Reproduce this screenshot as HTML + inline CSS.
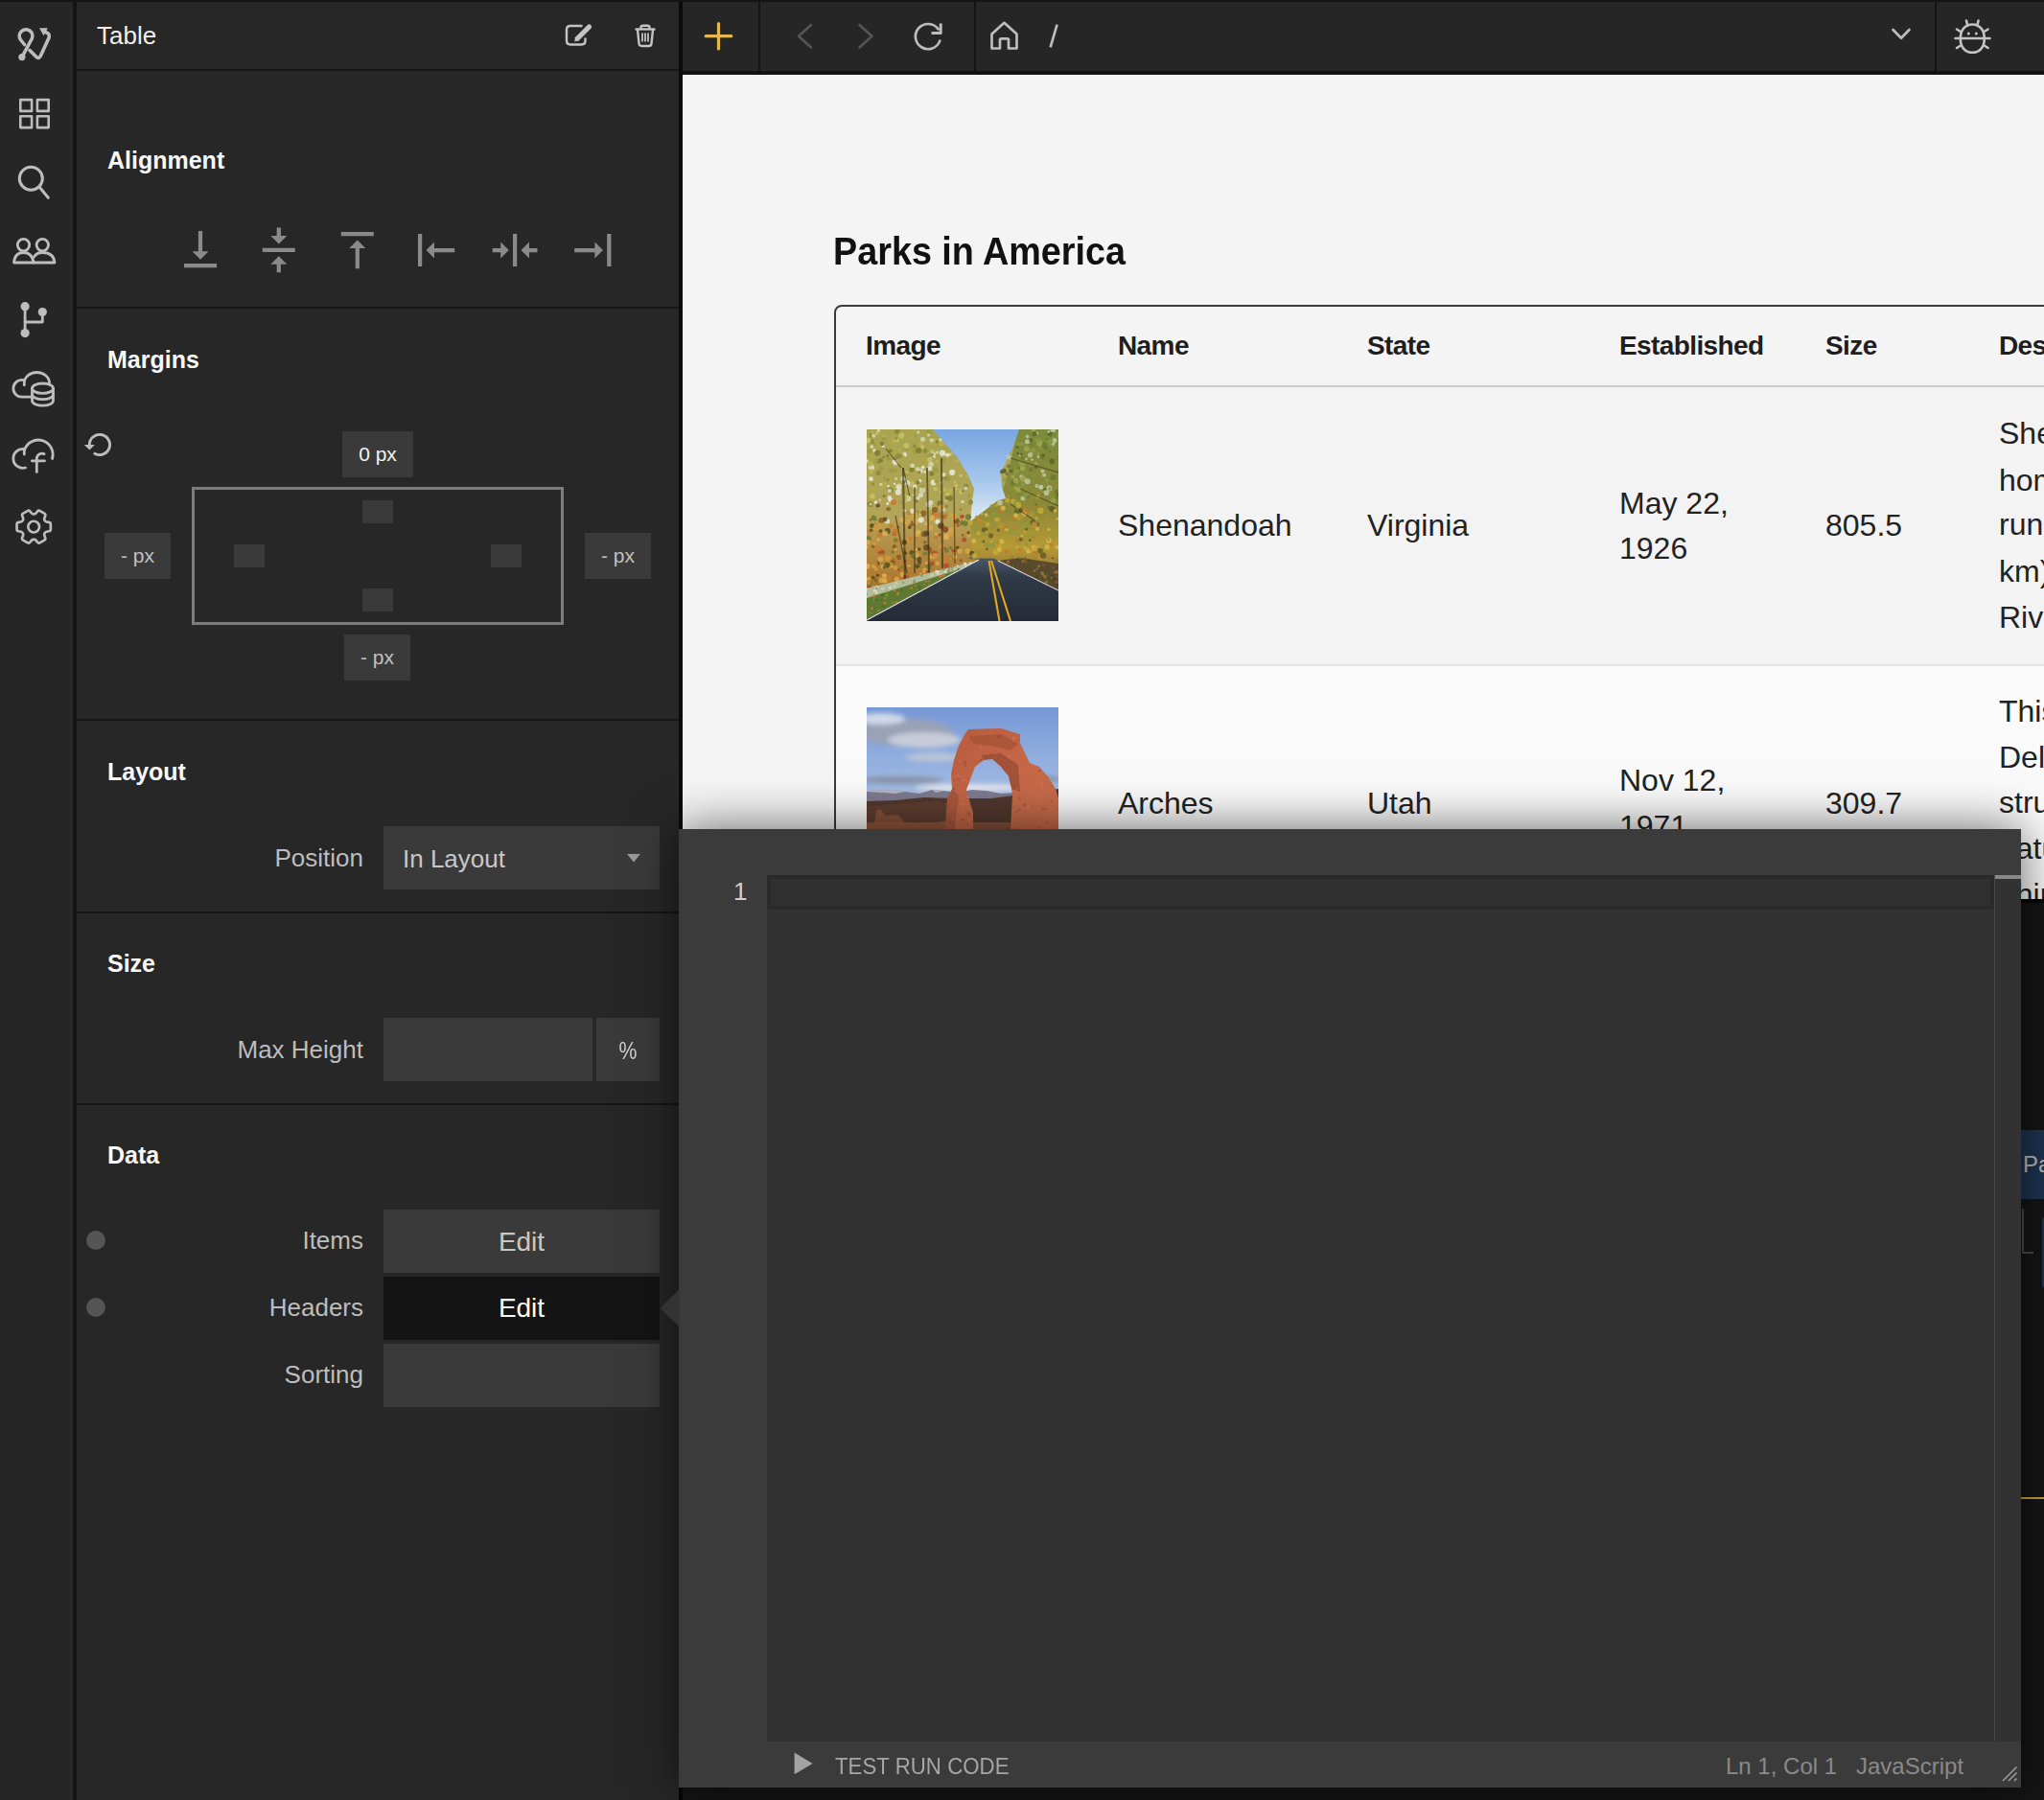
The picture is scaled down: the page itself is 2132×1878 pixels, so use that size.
<!DOCTYPE html>
<html><head><meta charset="utf-8">
<style>
*{box-sizing:border-box;margin:0;padding:0}
html,body{width:2132px;height:1878px;overflow:hidden;background:#151515;font-family:"Liberation Sans",sans-serif}
.a{position:absolute}
.t{position:absolute;white-space:nowrap;line-height:1}
.sb{left:0;top:2px;width:76px;height:1876px;background:#262626}
.sep{background:#141414}
.panel{left:80px;top:2px;width:628px;height:1876px;background:#272727}
.hline{left:80px;width:628px;height:2px;background:#161616}
.h{font-weight:700;font-size:25px;color:#f7f7f7;left:112px}
.lbl{font-size:26px;color:#bdbdbd;right:1753px;text-align:right}
.box{background:#3a3a3a}
.tb{left:712px;top:2px;width:1420px;height:72px;background:#262626}
.content{left:712px;top:78px;width:1420px;height:1800px;background:#f4f4f4;overflow:hidden}
svg{position:absolute;overflow:visible}
.hd{font-size:28px;font-weight:700;top:346.5px;letter-spacing:-0.6px}
.rw{font-size:32px}
</style></head><body>
<!-- top strip -->
<div class="a sep" style="left:0;top:0;width:2132px;height:2px"></div>
<!-- icon sidebar -->
<div class="a sb"></div>
<div class="a sep" style="left:76px;top:2px;width:4px;height:1876px"></div>
<!-- property panel -->
<div class="a panel"></div>
<div class="a hline" style="top:72px"></div>
<div class="a hline" style="top:320px"></div>
<div class="a hline" style="top:750px"></div>
<div class="a hline" style="top:951px"></div>
<div class="a hline" style="top:1151px"></div>
<div class="t" style="left:101px;top:24px;font-size:26px;color:#f0f0f0">Table</div>
<div class="t h" style="top:155px">Alignment</div>
<div class="t h" style="top:363px">Margins</div>
<div class="t h" style="top:793px">Layout</div>
<div class="t h" style="top:993px">Size</div>
<div class="t h" style="top:1193px">Data</div>


<!-- sidebar icons -->
<svg style="left:0;top:0" width="80" height="600" viewBox="0 0 80 600" fill="none" stroke="#bdbdbd" stroke-width="3" stroke-linecap="round" stroke-linejoin="round">
  <g stroke-width="3.6">
    <path d="M22.9,59.6 L33.2,40.5 A6.8,6.8 0 1 0 21.5,41.5 L25.5,46.5"/>
    <path d="M31,52.5 L38,59.5 Q40,61.5 42,59 L51,39.5 Q52.5,35 47.5,33.5"/>
  </g>
  <circle cx="22.9" cy="59.6" r="3.6" fill="#bdbdbd" stroke="none"/>
  <path d="M41,29.3 L49.8,29.3 L45.5,37.3 Z" fill="#bdbdbd" stroke="none"/>
  <g stroke-width="2.6" stroke-linecap="butt">
    <rect x="21.3" y="104.1" width="11.8" height="11.8"/>
    <rect x="38.9" y="104.1" width="11.8" height="11.8"/>
    <rect x="21.3" y="121.3" width="11.8" height="11.8"/>
    <rect x="38.9" y="121.3" width="11.8" height="11.8"/>
  </g>
  <circle cx="32.3" cy="186.2" r="12"/>
  <path d="M41.2,195.2 L50.3,206.3"/>
  <g stroke-width="2.8">
    <circle cx="24.5" cy="255.6" r="6.2"/>
    <circle cx="44.3" cy="255.6" r="6.2"/>
    <path d="M14.5,274 Q15.5,263.5 24.5,263.5 Q33.5,263.5 35,274 Z"/>
    <path d="M35,274 H57 Q56,263.5 44.3,263.5 Q38,263.5 35.5,268"/>
  </g>
  <g stroke-width="2.8">
    <path d="M26.1,320 V347.6"/>
    <path d="M26.1,336 H44.3 V325.5"/>
  </g>
  <circle cx="26.1" cy="319.7" r="4.6" fill="#bdbdbd" stroke="none"/>
  <circle cx="44.3" cy="325.5" r="4.6" fill="#bdbdbd" stroke="none"/>
  <circle cx="26.1" cy="347.6" r="4.6" fill="#bdbdbd" stroke="none"/>
  <g stroke-width="2.8">
    <path d="M32.4,414.2 H22.8 A8.9,8.9 0 1 1 25.4,396.8"/>
    <path d="M25.3,401.8 V399.5 A13.1,11 0 0 1 51.5,399.5"/>
    <ellipse cx="44.5" cy="405.2" rx="11" ry="5.2"/>
    <path d="M33.5,405.2 V418 A11,5.2 0 0 0 55.5,418 V405.2"/>
    <path d="M33.5,411.5 A11,5.2 0 0 0 55.5,411.5"/>
  </g>
  <g stroke-width="2.8">
    <path d="M26.5,488 A10,10 0 1 1 25.5,468.5"/>
    <path d="M25.3,474 V470 A14.3,14.3 0 0 1 54.5,478.5"/>
    <path d="M38.3,492.4 V479 A5.5,5.5 0 0 1 46,473.6"/>
    <path d="M33.3,480.8 H46.5"/>
  </g>
  <g transform="translate(35.2,549.6) rotate(90) scale(1.96) translate(-12,-12)" stroke-width="1.35">
    <path d="M9.594 3.94c.09-.542.56-.94 1.11-.94h2.593c.55 0 1.02.398 1.11.94l.213 1.281c.063.374.313.686.645.87.074.04.147.083.22.127.325.196.72.257 1.075.124l1.217-.456a1.125 1.125 0 0 1 1.37.49l1.296 2.247a1.125 1.125 0 0 1-.26 1.431l-1.003.827c-.293.241-.438.613-.43.992a7.723 7.723 0 0 1 0 .255c-.008.378.137.75.43.991l1.004.827c.424.35.534.955.26 1.43l-1.298 2.247a1.125 1.125 0 0 1-1.369.491l-1.217-.456c-.355-.133-.75-.072-1.076.124a6.47 6.47 0 0 1-.22.128c-.331.183-.581.495-.644.869l-.213 1.281c-.09.543-.56.94-1.110.94h-2.594c-.55 0-1.019-.398-1.11-.94l-.213-1.281c-.062-.374-.312-.686-.644-.87a6.52 6.52 0 0 1-.22-.127c-.325-.196-.72-.257-1.076-.124l-1.217.456a1.125 1.125 0 0 1-1.369-.49l-1.297-2.247a1.125 1.125 0 0 1 .26-1.431l1.004-.827c.292-.24.437-.613.43-.991a6.932 6.932 0 0 1 0-.255c.007-.38-.138-.751-.43-.992l-1.004-.827a1.125 1.125 0 0 1-.26-1.43l1.297-2.247a1.125 1.125 0 0 1 1.370-.491l1.216.456c.356.133.751.072 1.076-.124.072-.044.146-.086.22-.128.332-.183.582-.495.644-.869l.214-1.28Z"/>
    <path d="M15 12a3 3 0 1 1-6 0 3 3 0 0 1 6 0Z"/>
  </g>
</svg>

<!-- panel header icons -->
<svg style="left:580px;top:15px" width="120" height="45" viewBox="580 15 120 45" fill="none" stroke="#c4c4c4" stroke-width="2.4">
  <path d="M607.5,27 H595 Q591,27 591,31 V42.5 Q591,46.5 595,46.5 H606.5 Q610.5,46.5 610.5,42.5 V39.5"/>
  <path d="M601,41.5 L612.5,30" stroke-width="5.2"/><path d="M612.5,30 L614.5,28" stroke-width="5.2" stroke-linecap="round"/>
  <path d="M599,43.5 L600.5,38.5 L604,42 Z" fill="#c4c4c4" stroke="none"/>
  <path d="M662.5,30.5 H683.5"/>
  <path d="M668.5,30 V28.5 Q668.5,26.8 670.5,26.8 H675.5 Q677.5,26.8 677.5,28.5 V30"/>
  <path d="M665,31 L666.5,45.5 Q666.8,48 669.5,48 H676.5 Q679.2,48 679.5,45.5 L681,31"/>
  <path d="M670,34.5 V43.5 M673,34.5 V43.5 M676,34.5 V43.5" stroke-width="1.8"/>
</svg>

<!-- alignment icons -->
<svg style="left:170px;top:225px" width="480" height="70" viewBox="170 225 480 70" fill="#8a8a8a">
  <g transform="translate(183.5,234.7) scale(2.125)"><path d="M16 13h-3V3h-2v10H8l4 4 4-4zM4 19v2h16v-2H4z"/></g>
  <g transform="translate(265.3,235.4) scale(2.125)"><path d="M8 19h3v4h2v-4h3l-4-4-4 4zm8-14h-3V1h-2v4H8l4 4 4-4zM4 11v2h16v-2H4z"/></g>
  <g transform="translate(347.3,235.6) scale(2.125)"><path d="M8 11h3v10h2V11h3l-4-4-4 4zM4 3v2h16V3H4z"/></g>
  <g transform="translate(429.6,235.5) scale(2.125) rotate(-90 12 12)"><path d="M8 11h3v10h2V11h3l-4-4-4 4zM4 3v2h16V3H4z"/></g>
  <g transform="translate(511.6,235.5) scale(2.125) rotate(-90 12 12)"><path d="M8 19h3v4h2v-4h3l-4-4-4 4zm8-14h-3V1h-2v4H8l4 4 4-4zM4 11v2h16v-2H4z"/></g>
  <g transform="translate(592.8,235.5) scale(2.125) rotate(-90 12 12)"><path d="M16 13h-3V3h-2v10H8l4 4 4-4zM4 19v2h16v-2H4z"/></g>
</svg>

<!-- margins widget -->
<svg style="left:85px;top:445px" width="40" height="40" viewBox="85 445 40 40" fill="none" stroke="#bdbdbd" stroke-width="2.4">
  <path d="M93.4,465 A10.6,10.6 0 1 1 97.8,472.6" stroke-width="2.9"/>
  <path d="M87.8,464 L98.8,464 L93.4,469.4 Z" fill="#bdbdbd" stroke="none"/>
</svg>
<div class="a box" style="left:357px;top:450px;width:74px;height:48px"></div>
<div class="t" style="left:357px;width:74px;text-align:center;top:462.5px;font-size:21px;color:#f2f2f2">0 px</div>
<div class="a" style="left:200px;top:508px;width:388px;height:144px;border:3px solid #7c7c7c"></div>
<div class="a box" style="left:378px;top:522px;width:32px;height:24px"></div>
<div class="a box" style="left:244px;top:568px;width:32px;height:24px"></div>
<div class="a box" style="left:512px;top:568px;width:32px;height:24px"></div>
<div class="a box" style="left:378px;top:614px;width:32px;height:24px"></div>
<div class="a box" style="left:109px;top:556px;width:69px;height:48px"></div>
<div class="t" style="left:109px;width:69px;text-align:center;top:569px;font-size:21px;color:#c0c0c0">- px</div>
<div class="a box" style="left:610px;top:556px;width:69px;height:48px"></div>
<div class="t" style="left:610px;width:69px;text-align:center;top:569px;font-size:21px;color:#c0c0c0">- px</div>
<div class="a box" style="left:359px;top:662px;width:69px;height:48px"></div>
<div class="t" style="left:359px;width:69px;text-align:center;top:675px;font-size:21px;color:#c0c0c0">- px</div>

<!-- layout -->
<div class="t lbl" style="top:882px">Position</div>
<div class="a box" style="left:400px;top:862px;width:288px;height:66px"></div>
<div class="t" style="left:420px;top:883px;font-size:26px;color:#c8c8c8">In Layout</div>
<svg style="left:650px;top:885px" width="24" height="20" viewBox="650 885 24 20"><path d="M654,891 H668 L661,899.4 Z" fill="#9a9a9a"/></svg>

<!-- size -->
<div class="t lbl" style="top:1082px">Max Height</div>
<div class="a box" style="left:400px;top:1062px;width:218px;height:66px"></div>
<div class="a box" style="left:622px;top:1062px;width:66px;height:66px"></div>
<div class="t" style="left:622px;width:66px;text-align:center;top:1084px;font-size:25px;color:#d0d0d0;transform:scaleX(.85)">%</div>

<!-- data -->
<svg style="left:85px;top:1280px" width="30" height="100" viewBox="85 1280 30 100"><circle cx="100" cy="1294" r="10" fill="#555"/><circle cx="100" cy="1364" r="10" fill="#555"/></svg>
<div class="t lbl" style="top:1281px">Items</div>
<div class="t lbl" style="top:1351px">Headers</div>
<div class="t lbl" style="top:1421px">Sorting</div>
<div class="a box" style="left:400px;top:1262px;width:288px;height:66px"></div>
<div class="t" style="left:400px;width:288px;text-align:center;top:1282px;font-size:28px;color:#c8c8c8">Edit</div>
<div class="a" style="left:400px;top:1332px;width:288px;height:66px;background:#141414"></div>
<div class="t" style="left:400px;width:288px;text-align:center;top:1351px;font-size:28px;color:#fafafa">Edit</div>
<div class="a box" style="left:400px;top:1402px;width:288px;height:66px"></div>


<!-- separator panel/toolbar -->
<div class="a" style="left:708px;top:2px;width:4px;height:1876px;background:#0b0b0b"></div>
<!-- toolbar -->
<div class="a tb"></div>
<div class="a" style="left:712px;top:74px;width:1420px;height:4px;background:#111"></div>
<div class="a sep" style="left:791px;top:2px;width:2px;height:72px"></div>
<div class="a sep" style="left:1016px;top:2px;width:2px;height:72px"></div>
<div class="a sep" style="left:2018px;top:2px;width:2px;height:72px"></div>


<!-- toolbar icons -->
<svg style="left:712px;top:2px" width="1420" height="72" viewBox="712 2 1420 72" fill="none" stroke-linecap="round" stroke-linejoin="round">
  <path d="M749.5,24.5 V51 M736.2,37.7 H762.8" stroke="#e5b84c" stroke-width="3.2"/>
  <path d="M846,26 L833,37.8 L846,49.5" stroke="#555" stroke-width="2.6"/>
  <path d="M896.5,26 L909.5,37.8 L896.5,49.5" stroke="#555" stroke-width="2.6"/>
  <g stroke="#bdbdbd" stroke-width="2.7">
    <path d="M980.3,42.6 A13.1,13.1 0 1 1 978.6,30.4"/>
    <path d="M981.2,24.6 V34.4 H971.5" stroke-linecap="butt" stroke-width="3"/>
    <path d="M1034.5,50.5 V35.5 L1047.5,23.8 L1060.5,35.5 V50.5 H1052 V41.5 Q1052,40.3 1050.8,40.3 H1044.2 Q1043,40.3 1043,41.5 V50.5 Z"/>
    <path d="M1102.6,25.6 L1095.6,49.4" stroke-linecap="butt"/>
    <path d="M1974.5,31 L1983,39.8 L1991.5,31"/>
  </g>
  <g stroke="#c4c4c4" stroke-width="2.6">
    <path d="M2057.3,25.5 C2065.5,25.5 2069.8,32 2069.8,40.5 C2069.8,49 2065,54.8 2057.3,54.8 C2049.6,54.8 2044.8,49 2044.8,40.5 C2044.8,32 2049,25.5 2057.3,25.5 Z"/>
    <path d="M2039.5,40 H2075.5"/>
    <path d="M2052.3,26.5 L2051,21.5 M2062.3,26.5 L2063.6,21.5"/>
    <path d="M2045,33 L2041,30.5 M2069.6,33 L2073.6,30.5 M2045,47.5 L2041,50 M2069.6,47.5 L2073.6,50"/>
  </g>
  <circle cx="2053.3" cy="34.9" r="1.5" fill="#c4c4c4"/>
  <circle cx="2061.3" cy="34.9" r="1.5" fill="#c4c4c4"/>
</svg>

<!-- content -->
<div class="a content">
</div>
<div class="t" style="left:869px;top:242px;font-size:40px;font-weight:700;color:#111;transform:scaleX(.944);transform-origin:0 0">Parks in America</div>
<div class="a" style="left:870px;top:318px;width:1400px;height:1000px;border:2px solid #3a3a3a;border-radius:8px"></div>
<div class="a" style="left:872px;top:402px;width:1300px;height:2px;background:#cbcbcb"></div>
<div class="a" style="left:872px;top:404px;width:1300px;height:289px;background:#f3f3f3"></div>
<div class="a" style="left:872px;top:693px;width:1300px;height:2px;background:#e4e4e4"></div>
<div class="a" style="left:872px;top:695px;width:1300px;height:300px;background:#fafafa"></div>
<div style="color:#1e1e1e">
<div class="t hd" style="left:903px">Image</div>
<div class="t hd" style="left:1166px">Name</div>
<div class="t hd" style="left:1426px">State</div>
<div class="t hd" style="left:1689px">Established</div>
<div class="t hd" style="left:1904px">Size</div>
<div class="t hd" style="left:2085px">Description</div>
</div>
<div style="color:#222">
<div class="t rw" style="left:1166px;top:532px">Shenandoah</div>
<div class="t rw" style="left:1426px;top:532px">Virginia</div>
<div class="t rw" style="left:1689px;top:508.5px">May 22,</div>
<div class="t rw" style="left:1689px;top:556px">1926</div>
<div class="t rw" style="left:1904px;top:532px">805.5</div>
<div class="t rw" style="left:2085px;top:436px">Shenandoah</div>
<div class="t rw" style="left:2085px;top:484.5px">home</div>
<div class="t rw" style="left:2085px;top:531px">running</div>
<div class="t rw" style="left:2085px;top:579.5px">km)</div>
<div class="t rw" style="left:2085px;top:628px">River</div>
<div class="t rw" style="left:1166px;top:822px">Arches</div>
<div class="t rw" style="left:1426px;top:822px">Utah</div>
<div class="t rw" style="left:1689px;top:798px">Nov 12,</div>
<div class="t rw" style="left:1689px;top:846px">1971</div>
<div class="t rw" style="left:1904px;top:822px">309.7</div>
<div class="t rw" style="left:2085px;top:726px">This</div>
<div class="t rw" style="left:2085px;top:774px">Delicate</div>
<div class="t rw" style="left:2085px;top:821px">structure</div>
<div class="t rw" style="left:2085px;top:869px">natural</div>
<div class="t rw" style="left:2085px;top:917px">ohir</div>
</div>
<!-- photo 1 -->
<svg style="left:904px;top:448px;overflow:hidden" width="200" height="200" viewBox="0 0 200 200">
<defs>
<linearGradient id="p1sky" x1="0" y1="0" x2="0" y2="1"><stop offset="0" stop-color="#78a6e2"/><stop offset=".55" stop-color="#a4c6ec"/><stop offset="1" stop-color="#e2ecf2"/></linearGradient>
<linearGradient id="p1L" x1="0" y1="0" x2="0" y2="1"><stop offset="0" stop-color="#a8a450"/><stop offset=".45" stop-color="#b4a458"/><stop offset=".75" stop-color="#b07c34"/><stop offset="1" stop-color="#8a6a2c"/></linearGradient>
<linearGradient id="p1R" x1="0" y1="0" x2="0" y2="1"><stop offset="0" stop-color="#7c8a3c"/><stop offset=".5" stop-color="#8e8a38"/><stop offset=".72" stop-color="#b69a36"/><stop offset="1" stop-color="#7a6030"/></linearGradient>
<linearGradient id="p1road" x1="0" y1="0" x2="0" y2="1"><stop offset="0" stop-color="#4a5868"/><stop offset=".3" stop-color="#303a48"/><stop offset="1" stop-color="#252b36"/></linearGradient>
</defs>
<rect width="200" height="200" fill="url(#p1L)"/>
<path d="M112,0 H200 V170 L137,137 L110,136 L108,96 L137,74 L145,55 L158,0 Z" fill="url(#p1R)"/>
<path d="M69,0 L159,0 L152,20 L140,45 L141,60 L145,72 L137,74 L108,96 L110,75 L112,62 L106,48 L95,30 Z" fill="url(#p1sky)"/>
<circle cx="64.8" cy="25.6" r="1.3" fill="#e8ecdc" opacity=".85"/>
<circle cx="18.8" cy="99.1" r="1.6" fill="#d09a40" opacity=".85"/>
<circle cx="18.1" cy="72.2" r="1.4" fill="#b0a850" opacity=".85"/>
<circle cx="126.1" cy="99.1" r="2.4" fill="#c8a838" opacity=".85"/>
<circle cx="195.3" cy="7.9" r="1.8" fill="#8a9a48" opacity=".85"/>
<circle cx="108.1" cy="97.1" r="2.6" fill="#c8a838" opacity=".85"/>
<circle cx="116.3" cy="108.6" r="2.3" fill="#c8a838" opacity=".85"/>
<circle cx="112.9" cy="105.2" r="2.3" fill="#8a9a40" opacity=".85"/>
<circle cx="72.3" cy="42.2" r="2.8" fill="#9c9a40" opacity=".85"/>
<circle cx="175.0" cy="124.0" r="3.2" fill="#c8a838" opacity=".85"/>
<circle cx="15.5" cy="94.9" r="2.8" fill="#8a5a28" opacity=".85"/>
<circle cx="139.1" cy="101.0" r="2.1" fill="#c8a838" opacity=".85"/>
<circle cx="188.9" cy="80.6" r="1.3" fill="#7a8838" opacity=".85"/>
<circle cx="61.9" cy="98.3" r="2.1" fill="#e0b050" opacity=".85"/>
<circle cx="177.4" cy="59.0" r="1.9" fill="#c0c8a0" opacity=".85"/>
<circle cx="23.4" cy="10.0" r="1.5" fill="#b0a850" opacity=".85"/>
<circle cx="80.3" cy="47.2" r="2.1" fill="#e8ecdc" opacity=".85"/>
<circle cx="55.7" cy="70.6" r="3.0" fill="#b0a850" opacity=".85"/>
<circle cx="30.2" cy="30.0" r="1.7" fill="#8a8a38" opacity=".85"/>
<circle cx="166.2" cy="31.0" r="1.5" fill="#c0c8a0" opacity=".85"/>
<circle cx="73.9" cy="96.3" r="2.6" fill="#e8ecdc" opacity=".85"/>
<circle cx="190.0" cy="111.3" r="2.1" fill="#b89030" opacity=".85"/>
<circle cx="159.6" cy="66.7" r="1.4" fill="#7a8838" opacity=".85"/>
<circle cx="80.1" cy="32.4" r="2.1" fill="#9c9a40" opacity=".85"/>
<circle cx="68.0" cy="8.9" r="1.5" fill="#9c9a40" opacity=".85"/>
<circle cx="189.8" cy="104.3" r="1.6" fill="#d8b848" opacity=".85"/>
<circle cx="29.7" cy="42.9" r="1.9" fill="#9c9a40" opacity=".85"/>
<circle cx="23.1" cy="83.0" r="2.2" fill="#7a7a30" opacity=".85"/>
<circle cx="17.2" cy="17.4" r="1.7" fill="#d8dcc0" opacity=".85"/>
<circle cx="190.4" cy="61.5" r="3.0" fill="#c0c8a0" opacity=".85"/>
<circle cx="59.6" cy="109.3" r="2.9" fill="#8a5a28" opacity=".85"/>
<circle cx="181.7" cy="60.5" r="2.3" fill="#c0c8a0" opacity=".85"/>
<circle cx="65.9" cy="37.9" r="3.2" fill="#b0a850" opacity=".85"/>
<circle cx="148.0" cy="38.5" r="1.9" fill="#6a7830" opacity=".85"/>
<circle cx="94.4" cy="32.9" r="1.9" fill="#c0b050" opacity=".85"/>
<circle cx="191.0" cy="62.0" r="1.7" fill="#8a9a48" opacity=".85"/>
<circle cx="67.5" cy="82.1" r="2.4" fill="#c8c468" opacity=".85"/>
<circle cx="95.9" cy="111.0" r="1.4" fill="#d09a40" opacity=".85"/>
<circle cx="182.0" cy="133.0" r="2.2" fill="#c07828" opacity=".85"/>
<circle cx="86.8" cy="108.1" r="3.1" fill="#e0b050" opacity=".85"/>
<circle cx="92.6" cy="126.4" r="1.5" fill="#b04a28" opacity=".85"/>
<circle cx="5.5" cy="100.4" r="2.5" fill="#5a4a20" opacity=".85"/>
<circle cx="2.8" cy="165.1" r="2.3" fill="#b04a28" opacity=".85"/>
<circle cx="165.2" cy="35.9" r="1.8" fill="#8a9a48" opacity=".85"/>
<circle cx="152.7" cy="55.4" r="2.9" fill="#6a7830" opacity=".85"/>
<circle cx="182.0" cy="60.1" r="2.4" fill="#c0c8a0" opacity=".85"/>
<circle cx="100.3" cy="90.4" r="1.2" fill="#5a4a20" opacity=".85"/>
<circle cx="155.3" cy="103.5" r="1.5" fill="#c07828" opacity=".85"/>
<circle cx="94.7" cy="123.3" r="1.9" fill="#5a4a20" opacity=".85"/>
<circle cx="156.9" cy="18.0" r="1.7" fill="#5a6428" opacity=".85"/>
<circle cx="8.4" cy="16.6" r="1.3" fill="#9c9a40" opacity=".85"/>
<circle cx="88.6" cy="104.1" r="2.2" fill="#d8a848" opacity=".85"/>
<circle cx="90.5" cy="90.7" r="3.1" fill="#d8a848" opacity=".85"/>
<circle cx="40.5" cy="76.1" r="2.0" fill="#c0b050" opacity=".85"/>
<circle cx="14.5" cy="40.9" r="2.5" fill="#9c9a40" opacity=".85"/>
<circle cx="179.4" cy="26.3" r="2.5" fill="#8a9a48" opacity=".85"/>
<circle cx="50.6" cy="23.3" r="2.7" fill="#9c9a40" opacity=".85"/>
<circle cx="79.7" cy="82.8" r="2.9" fill="#d8dcc0" opacity=".85"/>
<circle cx="80.8" cy="71.6" r="1.4" fill="#c0b050" opacity=".85"/>
<circle cx="3.9" cy="94.2" r="1.2" fill="#8a5a28" opacity=".85"/>
<circle cx="103.5" cy="50.2" r="1.4" fill="#b0a850" opacity=".85"/>
<circle cx="194.3" cy="17.8" r="1.3" fill="#8a9a48" opacity=".85"/>
<circle cx="54.1" cy="22.0" r="3.0" fill="#7a7a30" opacity=".85"/>
<circle cx="81.2" cy="91.2" r="2.2" fill="#8a5a28" opacity=".85"/>
<circle cx="17.9" cy="9.8" r="2.1" fill="#9c9a40" opacity=".85"/>
<circle cx="53.8" cy="2.9" r="1.7" fill="#d0d8b0" opacity=".85"/>
<circle cx="171.2" cy="11.3" r="2.1" fill="#5a6428" opacity=".85"/>
<circle cx="198.9" cy="71.0" r="2.4" fill="#6a7830" opacity=".85"/>
<circle cx="21.9" cy="27.4" r="1.6" fill="#7a7a30" opacity=".85"/>
<circle cx="125.7" cy="90.3" r="2.1" fill="#b89030" opacity=".85"/>
<circle cx="35.6" cy="59.0" r="1.7" fill="#c8c468" opacity=".85"/>
<circle cx="3.7" cy="86.0" r="2.2" fill="#b0a850" opacity=".85"/>
<circle cx="186.9" cy="18.1" r="2.1" fill="#a0a850" opacity=".85"/>
<circle cx="194.1" cy="52.3" r="1.7" fill="#8a9a48" opacity=".85"/>
<circle cx="166.5" cy="120.1" r="2.0" fill="#8a9a40" opacity=".85"/>
<circle cx="2.9" cy="106.3" r="2.1" fill="#c87a30" opacity=".85"/>
<circle cx="16.9" cy="143.0" r="2.5" fill="#d8a848" opacity=".85"/>
<circle cx="119.8" cy="117.8" r="1.6" fill="#8a9a40" opacity=".85"/>
<circle cx="89.2" cy="44.8" r="3.1" fill="#e8ecdc" opacity=".85"/>
<circle cx="64.7" cy="5.9" r="1.6" fill="#d8dcc0" opacity=".85"/>
<circle cx="0.2" cy="64.9" r="2.2" fill="#b0a850" opacity=".85"/>
<circle cx="49.6" cy="132.0" r="2.8" fill="#b04a28" opacity=".85"/>
<circle cx="4.5" cy="51.7" r="2.4" fill="#e8ecdc" opacity=".85"/>
<circle cx="170.6" cy="26.4" r="2.8" fill="#c0c8a0" opacity=".85"/>
<circle cx="77.9" cy="55.4" r="1.5" fill="#d0d8b0" opacity=".85"/>
<circle cx="125.5" cy="124.8" r="1.5" fill="#6a5a28" opacity=".85"/>
<circle cx="150.6" cy="96.6" r="1.2" fill="#b89030" opacity=".85"/>
<circle cx="136.6" cy="117.9" r="1.3" fill="#c07828" opacity=".85"/>
<circle cx="75.3" cy="76.7" r="1.2" fill="#6a7a34" opacity=".85"/>
<circle cx="159.5" cy="127.2" r="2.3" fill="#b89030" opacity=".85"/>
<circle cx="105.2" cy="126.8" r="2.8" fill="#d8a848" opacity=".85"/>
<circle cx="47.0" cy="128.6" r="2.5" fill="#5a4a20" opacity=".85"/>
<circle cx="98.8" cy="65.0" r="2.6" fill="#c8c468" opacity=".85"/>
<circle cx="123.4" cy="109.3" r="1.5" fill="#8a9a40" opacity=".85"/>
<circle cx="130.3" cy="117.8" r="1.5" fill="#d8b848" opacity=".85"/>
<circle cx="12.1" cy="45.7" r="2.6" fill="#8a8a38" opacity=".85"/>
<circle cx="58.2" cy="87.8" r="2.1" fill="#d09a40" opacity=".85"/>
<circle cx="198.7" cy="93.3" r="1.4" fill="#d8b848" opacity=".85"/>
<circle cx="3.5" cy="78.0" r="3.1" fill="#8a8a38" opacity=".85"/>
<circle cx="198.8" cy="65.8" r="3.1" fill="#6a7830" opacity=".85"/>
<circle cx="26.5" cy="139.4" r="3.0" fill="#8a5a28" opacity=".85"/>
<circle cx="46.3" cy="152.6" r="1.2" fill="#c87a30" opacity=".85"/>
<circle cx="190.0" cy="115.9" r="2.7" fill="#d8b848" opacity=".85"/>
<circle cx="68.8" cy="53.7" r="1.2" fill="#c0b050" opacity=".85"/>
<circle cx="167.8" cy="20.4" r="2.6" fill="#7a8838" opacity=".85"/>
<circle cx="58.0" cy="63.3" r="3.2" fill="#d0d8b0" opacity=".85"/>
<circle cx="15.3" cy="157.3" r="2.9" fill="#d8a848" opacity=".85"/>
<circle cx="20.3" cy="141.9" r="3.1" fill="#6a7a34" opacity=".85"/>
<circle cx="194.2" cy="74.2" r="2.7" fill="#a0a850" opacity=".85"/>
<circle cx="188.1" cy="93.4" r="1.3" fill="#b89030" opacity=".85"/>
<circle cx="82.2" cy="104.5" r="2.9" fill="#5a4a20" opacity=".85"/>
<circle cx="9.8" cy="157.6" r="2.1" fill="#8a5a28" opacity=".85"/>
<circle cx="56.3" cy="43.5" r="2.5" fill="#e0e4d0" opacity=".85"/>
<circle cx="33.5" cy="27.5" r="3.0" fill="#8a8a38" opacity=".85"/>
<circle cx="66.6" cy="129.1" r="2.3" fill="#6a7a34" opacity=".85"/>
<circle cx="18.1" cy="58.1" r="1.7" fill="#7a7a30" opacity=".85"/>
<circle cx="161.9" cy="34.4" r="2.9" fill="#a0a850" opacity=".85"/>
<circle cx="82.8" cy="89.1" r="1.9" fill="#c87a30" opacity=".85"/>
<circle cx="99.6" cy="97.6" r="2.6" fill="#6a7a34" opacity=".85"/>
<circle cx="18.5" cy="152.5" r="2.5" fill="#e0b050" opacity=".85"/>
<circle cx="174.6" cy="3.7" r="2.6" fill="#a0a850" opacity=".85"/>
<circle cx="193.7" cy="83.3" r="3.1" fill="#6a5a28" opacity=".85"/>
<circle cx="49.7" cy="18.5" r="2.2" fill="#9c9a40" opacity=".85"/>
<circle cx="188.3" cy="122.7" r="2.7" fill="#d8b848" opacity=".85"/>
<circle cx="17.0" cy="132.1" r="1.5" fill="#c87a30" opacity=".85"/>
<circle cx="25.6" cy="42.8" r="2.6" fill="#9c9a40" opacity=".85"/>
<circle cx="19.9" cy="51.1" r="1.6" fill="#7a7a30" opacity=".85"/>
<circle cx="44.7" cy="102.2" r="1.8" fill="#5a4a20" opacity=".85"/>
<circle cx="55.7" cy="53.8" r="1.7" fill="#e8ecdc" opacity=".85"/>
<circle cx="47.0" cy="42.0" r="2.6" fill="#7a7a30" opacity=".85"/>
<circle cx="11.1" cy="33.0" r="2.5" fill="#9c9a40" opacity=".85"/>
<circle cx="51.5" cy="113.5" r="1.7" fill="#c87a30" opacity=".85"/>
<circle cx="139.2" cy="122.1" r="2.0" fill="#c8a838" opacity=".85"/>
<circle cx="159.4" cy="125.7" r="1.6" fill="#c07828" opacity=".85"/>
<circle cx="62.3" cy="139.4" r="1.6" fill="#d8a848" opacity=".85"/>
<circle cx="21.8" cy="106.0" r="3.0" fill="#5a4a20" opacity=".85"/>
<circle cx="83.4" cy="113.1" r="1.5" fill="#e0b050" opacity=".85"/>
<circle cx="10.9" cy="4.0" r="2.0" fill="#c8c468" opacity=".85"/>
<circle cx="36.8" cy="76.4" r="1.8" fill="#9c9a40" opacity=".85"/>
<circle cx="65.8" cy="31.5" r="2.7" fill="#c8c468" opacity=".85"/>
<circle cx="62.4" cy="123.3" r="3.2" fill="#5a4a20" opacity=".85"/>
<circle cx="33.9" cy="0.5" r="1.9" fill="#9c9a40" opacity=".85"/>
<circle cx="112.2" cy="129.0" r="2.7" fill="#8a9a40" opacity=".85"/>
<circle cx="164.4" cy="73.5" r="2.1" fill="#8a9a40" opacity=".85"/>
<circle cx="108.3" cy="75.9" r="2.7" fill="#8a8a38" opacity=".85"/>
<circle cx="6.1" cy="69.8" r="2.7" fill="#c8c468" opacity=".85"/>
<circle cx="75.1" cy="78.9" r="1.3" fill="#b0a850" opacity=".85"/>
<circle cx="67.8" cy="46.3" r="2.4" fill="#7a7a30" opacity=".85"/>
<circle cx="149.3" cy="117.2" r="1.8" fill="#b89030" opacity=".85"/>
<circle cx="4.9" cy="39.8" r="3.1" fill="#e0e4d0" opacity=".85"/>
<circle cx="163.0" cy="22.6" r="1.2" fill="#7a8838" opacity=".85"/>
<circle cx="60.7" cy="117.7" r="1.7" fill="#8a5a28" opacity=".85"/>
<circle cx="92.2" cy="133.3" r="2.2" fill="#e0b050" opacity=".85"/>
<circle cx="150.6" cy="42.0" r="1.3" fill="#c0c8a0" opacity=".85"/>
<circle cx="14.4" cy="106.2" r="2.0" fill="#5a4a20" opacity=".85"/>
<circle cx="34.6" cy="22.6" r="3.0" fill="#b0a850" opacity=".85"/>
<circle cx="168.2" cy="49.9" r="1.9" fill="#7a8838" opacity=".85"/>
<circle cx="52.1" cy="74.7" r="1.7" fill="#7a7a30" opacity=".85"/>
<circle cx="176.8" cy="98.3" r="2.0" fill="#c07828" opacity=".85"/>
<circle cx="161.7" cy="111.1" r="1.4" fill="#d8b848" opacity=".85"/>
<circle cx="176.6" cy="39.3" r="1.9" fill="#5a6428" opacity=".85"/>
<circle cx="46.6" cy="8.6" r="2.9" fill="#b0a850" opacity=".85"/>
<circle cx="186.0" cy="63.3" r="2.1" fill="#5a6428" opacity=".85"/>
<circle cx="155.0" cy="113.0" r="2.5" fill="#b89030" opacity=".85"/>
<circle cx="73.7" cy="24.0" r="1.7" fill="#d0d8b0" opacity=".85"/>
<circle cx="81.8" cy="63.2" r="1.4" fill="#c8c468" opacity=".85"/>
<circle cx="159.1" cy="93.2" r="1.4" fill="#d8b848" opacity=".85"/>
<circle cx="106.8" cy="111.0" r="1.7" fill="#d8a848" opacity=".85"/>
<circle cx="10.3" cy="126.7" r="2.0" fill="#c87a30" opacity=".85"/>
<circle cx="72.8" cy="33.5" r="1.6" fill="#c8c468" opacity=".85"/>
<circle cx="86.8" cy="26.6" r="1.4" fill="#d0d8b0" opacity=".85"/>
<circle cx="176.6" cy="78.4" r="1.2" fill="#6a5a28" opacity=".85"/>
<circle cx="28.5" cy="137.1" r="2.3" fill="#8a5a28" opacity=".85"/>
<circle cx="69.6" cy="27.5" r="1.3" fill="#e0e4d0" opacity=".85"/>
<circle cx="98.1" cy="136.8" r="1.6" fill="#b04a28" opacity=".85"/>
<circle cx="167.5" cy="7.4" r="1.8" fill="#c0c8a0" opacity=".85"/>
<circle cx="185.2" cy="65.9" r="2.4" fill="#8a9a48" opacity=".85"/>
<circle cx="124.2" cy="104.5" r="2.1" fill="#6a5a28" opacity=".85"/>
<circle cx="43.6" cy="68.0" r="2.0" fill="#9c9a40" opacity=".85"/>
<circle cx="163.1" cy="32.7" r="2.9" fill="#7a8838" opacity=".85"/>
<circle cx="7.6" cy="142.5" r="2.4" fill="#d8a848" opacity=".85"/>
<circle cx="49.9" cy="66.2" r="2.2" fill="#d8dcc0" opacity=".85"/>
<circle cx="4.7" cy="105.2" r="1.7" fill="#5a4a20" opacity=".85"/>
<circle cx="71.7" cy="62.1" r="2.2" fill="#c8c468" opacity=".85"/>
<circle cx="8.1" cy="22.1" r="1.8" fill="#e8ecdc" opacity=".85"/>
<circle cx="16.0" cy="127.9" r="2.5" fill="#b04a28" opacity=".85"/>
<circle cx="5.2" cy="11.3" r="2.6" fill="#9c9a40" opacity=".85"/>
<circle cx="183.2" cy="28.1" r="3.1" fill="#6a7830" opacity=".85"/>
<circle cx="166.6" cy="103.8" r="1.8" fill="#6a5a28" opacity=".85"/>
<circle cx="55.0" cy="138.7" r="2.2" fill="#5a4a20" opacity=".85"/>
<circle cx="41.7" cy="44.7" r="1.8" fill="#c8c468" opacity=".85"/>
<circle cx="39.8" cy="68.6" r="1.8" fill="#c0b050" opacity=".85"/>
<circle cx="179.1" cy="28.7" r="1.4" fill="#c0c8a0" opacity=".85"/>
<circle cx="9.7" cy="145.9" r="2.1" fill="#d09a40" opacity=".85"/>
<circle cx="50.4" cy="91.1" r="2.7" fill="#c0b050" opacity=".85"/>
<circle cx="152.9" cy="75.2" r="2.7" fill="#c8a838" opacity=".85"/>
<circle cx="59.3" cy="87.7" r="3.1" fill="#8a5a28" opacity=".85"/>
<circle cx="146.6" cy="127.0" r="1.8" fill="#b89030" opacity=".85"/>
<circle cx="86.4" cy="87.2" r="1.5" fill="#b0a850" opacity=".85"/>
<circle cx="10.9" cy="96.4" r="2.2" fill="#6a7a34" opacity=".85"/>
<circle cx="82.6" cy="51.2" r="1.9" fill="#8a8a38" opacity=".85"/>
<circle cx="31.7" cy="2.4" r="2.6" fill="#8a8a38" opacity=".85"/>
<circle cx="19.2" cy="108.5" r="2.8" fill="#e0b050" opacity=".85"/>
<circle cx="11.2" cy="139.5" r="2.4" fill="#5a4a20" opacity=".85"/>
<circle cx="120.4" cy="88.0" r="1.5" fill="#c8a838" opacity=".85"/>
<circle cx="8.8" cy="90.4" r="1.7" fill="#c87a30" opacity=".85"/>
<circle cx="182.3" cy="17.8" r="2.5" fill="#8a9a48" opacity=".85"/>
<circle cx="28.5" cy="33.9" r="2.2" fill="#e0e4d0" opacity=".85"/>
<circle cx="162.7" cy="29.7" r="1.8" fill="#6a7830" opacity=".85"/>
<circle cx="198.8" cy="123.1" r="2.3" fill="#d8b848" opacity=".85"/>
<circle cx="168.9" cy="126.7" r="2.7" fill="#d8b848" opacity=".85"/>
<circle cx="52.3" cy="109.5" r="3.0" fill="#d8a848" opacity=".85"/>
<circle cx="142.3" cy="45.2" r="2.1" fill="#c0c8a0" opacity=".85"/>
<circle cx="194.4" cy="50.3" r="3.0" fill="#6a7830" opacity=".85"/>
<circle cx="176.0" cy="2.6" r="1.7" fill="#7a8838" opacity=".85"/>
<circle cx="40.6" cy="27.1" r="1.6" fill="#e0e4d0" opacity=".85"/>
<circle cx="65.7" cy="40.7" r="2.5" fill="#e8ecdc" opacity=".85"/>
<circle cx="87.4" cy="123.2" r="1.8" fill="#6a7a34" opacity=".85"/>
<circle cx="78.3" cy="99.5" r="1.5" fill="#c87a30" opacity=".85"/>
<circle cx="5.4" cy="18.1" r="1.9" fill="#d8dcc0" opacity=".85"/>
<circle cx="27.7" cy="109.4" r="1.3" fill="#c87a30" opacity=".85"/>
<circle cx="13.2" cy="100.4" r="2.8" fill="#d09a40" opacity=".85"/>
<circle cx="175.9" cy="128.5" r="2.0" fill="#c07828" opacity=".85"/>
<circle cx="41.1" cy="19.0" r="2.9" fill="#9c9a40" opacity=".85"/>
<circle cx="165.0" cy="107.4" r="1.4" fill="#c8a838" opacity=".85"/>
<circle cx="158.4" cy="109.9" r="1.9" fill="#8a9a40" opacity=".85"/>
<circle cx="4.2" cy="43.6" r="2.6" fill="#c0b050" opacity=".85"/>
<circle cx="182.1" cy="130.8" r="2.2" fill="#8a9a40" opacity=".85"/>
<circle cx="82.6" cy="74.2" r="1.9" fill="#c8c468" opacity=".85"/>
<circle cx="172.4" cy="15.5" r="1.5" fill="#6a7830" opacity=".85"/>
<circle cx="104.7" cy="49.0" r="1.3" fill="#c0b050" opacity=".85"/>
<circle cx="98.2" cy="83.6" r="1.6" fill="#8a8a38" opacity=".85"/>
<circle cx="103.0" cy="98.3" r="2.8" fill="#6a7a34" opacity=".85"/>
<circle cx="157.6" cy="118.5" r="2.5" fill="#8a9a40" opacity=".85"/>
<circle cx="19.0" cy="157.8" r="2.7" fill="#e0b050" opacity=".85"/>
<circle cx="177.7" cy="4.3" r="1.7" fill="#c0c8a0" opacity=".85"/>
<circle cx="100.2" cy="64.5" r="1.7" fill="#8a8a38" opacity=".85"/>
<circle cx="25.4" cy="101.0" r="2.4" fill="#c87a30" opacity=".85"/>
<circle cx="69.7" cy="55.5" r="2.9" fill="#e8ecdc" opacity=".85"/>
<circle cx="148.4" cy="28.8" r="2.7" fill="#c0c8a0" opacity=".85"/>
<circle cx="46.2" cy="56.8" r="2.6" fill="#e8ecdc" opacity=".85"/>
<circle cx="38.3" cy="51.3" r="2.9" fill="#d8dcc0" opacity=".85"/>
<circle cx="144.6" cy="102.5" r="1.7" fill="#c07828" opacity=".85"/>
<circle cx="199.0" cy="28.0" r="1.6" fill="#8a9a48" opacity=".85"/>
<circle cx="146.7" cy="73.9" r="2.5" fill="#c8a838" opacity=".85"/>
<circle cx="56.2" cy="150.5" r="1.2" fill="#e0b050" opacity=".85"/>
<circle cx="138.7" cy="85.1" r="2.1" fill="#c07828" opacity=".85"/>
<circle cx="51.4" cy="125.5" r="1.7" fill="#e0b050" opacity=".85"/>
<circle cx="140.2" cy="99.9" r="2.9" fill="#b89030" opacity=".85"/>
<circle cx="154.8" cy="119.0" r="2.6" fill="#b89030" opacity=".85"/>
<circle cx="24.8" cy="73.5" r="2.6" fill="#e0e4d0" opacity=".85"/>
<circle cx="48.5" cy="68.0" r="1.5" fill="#e0e4d0" opacity=".85"/>
<circle cx="171.7" cy="88.1" r="2.9" fill="#b89030" opacity=".85"/>
<circle cx="65.6" cy="1.8" r="3.0" fill="#9c9a40" opacity=".85"/>
<circle cx="7.6" cy="92.4" r="2.8" fill="#6a7a34" opacity=".85"/>
<circle cx="114.9" cy="92.0" r="2.2" fill="#b89030" opacity=".85"/>
<circle cx="158.5" cy="62.9" r="2.7" fill="#a0a850" opacity=".85"/>
<circle cx="42.0" cy="116.3" r="2.7" fill="#d09a40" opacity=".85"/>
<circle cx="145.8" cy="104.4" r="1.7" fill="#d8b848" opacity=".85"/>
<circle cx="83.7" cy="71.5" r="1.9" fill="#7a7a30" opacity=".85"/>
<circle cx="21.9" cy="51.6" r="3.1" fill="#b0a850" opacity=".85"/>
<circle cx="92.4" cy="28.0" r="1.3" fill="#b0a850" opacity=".85"/>
<circle cx="93.8" cy="95.5" r="3.1" fill="#8a5a28" opacity=".85"/>
<circle cx="159.1" cy="70.3" r="2.7" fill="#7a8838" opacity=".85"/>
<circle cx="25.0" cy="141.7" r="2.9" fill="#d8a848" opacity=".85"/>
<circle cx="140.8" cy="116.9" r="2.6" fill="#d8b848" opacity=".85"/>
<circle cx="0.5" cy="122.7" r="1.7" fill="#d8a848" opacity=".85"/>
<circle cx="64.1" cy="82.4" r="1.4" fill="#c0b050" opacity=".85"/>
<circle cx="30.6" cy="51.5" r="1.4" fill="#d0d8b0" opacity=".85"/>
<circle cx="181.2" cy="133.3" r="2.9" fill="#b89030" opacity=".85"/>
<circle cx="116.5" cy="111.7" r="1.3" fill="#8a9a40" opacity=".85"/>
<circle cx="50.0" cy="17.3" r="1.7" fill="#8a8a38" opacity=".85"/>
<circle cx="69.3" cy="26.0" r="2.8" fill="#d8dcc0" opacity=".85"/>
<circle cx="121.9" cy="117.0" r="1.4" fill="#6a5a28" opacity=".85"/>
<circle cx="39.5" cy="117.8" r="2.7" fill="#5a4a20" opacity=".85"/>
<circle cx="23.7" cy="71.2" r="2.1" fill="#e8ecdc" opacity=".85"/>
<circle cx="11.7" cy="79.4" r="2.2" fill="#5a4a20" opacity=".85"/>
<circle cx="32.9" cy="101.9" r="1.5" fill="#8a5a28" opacity=".85"/>
<circle cx="93.6" cy="95.6" r="2.9" fill="#8a5a28" opacity=".85"/>
<circle cx="72.1" cy="109.9" r="1.3" fill="#8a5a28" opacity=".85"/>
<circle cx="161.7" cy="16.0" r="2.7" fill="#8a9a48" opacity=".85"/>
<circle cx="6.8" cy="122.1" r="1.9" fill="#8a5a28" opacity=".85"/>
<circle cx="68.3" cy="132.3" r="3.0" fill="#d8a848" opacity=".85"/>
<circle cx="87.0" cy="71.8" r="2.9" fill="#7a7a30" opacity=".85"/>
<circle cx="71.0" cy="83.9" r="3.2" fill="#8a5a28" opacity=".85"/>
<circle cx="195.0" cy="111.3" r="1.9" fill="#8a9a40" opacity=".85"/>
<circle cx="194.5" cy="14.9" r="2.0" fill="#c0c8a0" opacity=".85"/>
<circle cx="177.1" cy="92.7" r="1.8" fill="#c8a838" opacity=".85"/>
<circle cx="9.3" cy="139.7" r="2.7" fill="#c87a30" opacity=".85"/>
<circle cx="122.3" cy="104.8" r="2.6" fill="#6a5a28" opacity=".85"/>
<circle cx="175.3" cy="14.1" r="2.5" fill="#7a8838" opacity=".85"/>
<circle cx="36.3" cy="6.3" r="3.0" fill="#c8c468" opacity=".85"/>
<circle cx="73.8" cy="139.8" r="2.3" fill="#d8a848" opacity=".85"/>
<circle cx="172.5" cy="31.4" r="1.2" fill="#c0c8a0" opacity=".85"/>
<circle cx="10.9" cy="96.5" r="1.4" fill="#e0b050" opacity=".85"/>
<circle cx="77.4" cy="100.6" r="3.2" fill="#5a4a20" opacity=".85"/>
<circle cx="154.0" cy="93.3" r="2.1" fill="#c07828" opacity=".85"/>
<circle cx="1.9" cy="113.8" r="2.9" fill="#6a7a34" opacity=".85"/>
<circle cx="173.9" cy="21.9" r="2.6" fill="#8a9a48" opacity=".85"/>
<circle cx="90.2" cy="126.5" r="1.9" fill="#b04a28" opacity=".85"/>
<circle cx="125.7" cy="120.6" r="3.1" fill="#8a9a40" opacity=".85"/>
<circle cx="182.7" cy="9.0" r="1.3" fill="#7a8838" opacity=".85"/>
<circle cx="137.3" cy="105.1" r="1.8" fill="#6a5a28" opacity=".85"/>
<circle cx="33.2" cy="146.4" r="1.3" fill="#8a5a28" opacity=".85"/>
<circle cx="189.8" cy="123.7" r="1.5" fill="#c8a838" opacity=".85"/>
<circle cx="72.7" cy="109.6" r="2.0" fill="#e0b050" opacity=".85"/>
<circle cx="155.6" cy="77.0" r="2.7" fill="#8a9a40" opacity=".85"/>
<circle cx="58.5" cy="10.3" r="2.6" fill="#d0d8b0" opacity=".85"/>
<circle cx="66.4" cy="103.0" r="2.9" fill="#d8a848" opacity=".85"/>
<circle cx="49.2" cy="65.9" r="2.7" fill="#b0a850" opacity=".85"/>
<circle cx="161.5" cy="48.2" r="1.7" fill="#a0a850" opacity=".85"/>
<circle cx="31.5" cy="156.5" r="2.8" fill="#d8a848" opacity=".85"/>
<circle cx="173.4" cy="97.2" r="2.9" fill="#6a5a28" opacity=".85"/>
<circle cx="69.4" cy="14.5" r="2.8" fill="#b0a850" opacity=".85"/>
<circle cx="157.5" cy="122.8" r="1.8" fill="#c8a838" opacity=".85"/>
<circle cx="135.5" cy="79.1" r="1.7" fill="#c8a838" opacity=".85"/>
<circle cx="158.3" cy="78.2" r="2.8" fill="#c8a838" opacity=".85"/>
<circle cx="46.6" cy="98.5" r="3.0" fill="#8a5a28" opacity=".85"/>
<circle cx="95.3" cy="100.2" r="1.6" fill="#b04a28" opacity=".85"/>
<circle cx="161.2" cy="49.3" r="1.9" fill="#c0c8a0" opacity=".85"/>
<circle cx="171.4" cy="41.9" r="2.2" fill="#6a7830" opacity=".85"/>
<circle cx="74.3" cy="78.8" r="1.8" fill="#c87a30" opacity=".85"/>
<circle cx="69.0" cy="88.3" r="1.3" fill="#5a4a20" opacity=".85"/>
<circle cx="185.1" cy="47.6" r="2.1" fill="#c0c8a0" opacity=".85"/>
<circle cx="50.8" cy="6.4" r="1.6" fill="#9c9a40" opacity=".85"/>
<circle cx="5.5" cy="5.9" r="2.6" fill="#8a8a38" opacity=".85"/>
<circle cx="12.8" cy="101.7" r="1.4" fill="#d09a40" opacity=".85"/>
<circle cx="51.4" cy="96.0" r="3.1" fill="#e0b050" opacity=".85"/>
<circle cx="36.5" cy="144.4" r="1.7" fill="#6a7a34" opacity=".85"/>
<circle cx="188.2" cy="10.1" r="1.3" fill="#6a7830" opacity=".85"/>
<circle cx="51.6" cy="87.3" r="2.7" fill="#8a8a38" opacity=".85"/>
<circle cx="11.2" cy="24.6" r="3.1" fill="#7a7a30" opacity=".85"/>
<circle cx="130.5" cy="80.0" r="2.0" fill="#8a9a40" opacity=".85"/>
<circle cx="47.7" cy="24.3" r="1.2" fill="#b0a850" opacity=".85"/>
<circle cx="159.8" cy="26.7" r="1.4" fill="#c0c8a0" opacity=".85"/>
<circle cx="28.0" cy="76.0" r="3.1" fill="#c87a30" opacity=".85"/>
<circle cx="68.0" cy="139.9" r="2.5" fill="#b04a28" opacity=".85"/>
<circle cx="66.4" cy="125.1" r="2.1" fill="#b04a28" opacity=".85"/>
<circle cx="87.8" cy="25.4" r="1.7" fill="#c8c468" opacity=".85"/>
<circle cx="54.2" cy="142.7" r="1.5" fill="#5a4a20" opacity=".85"/>
<circle cx="21.8" cy="77.6" r="1.5" fill="#e8ecdc" opacity=".85"/>
<circle cx="11.4" cy="152.2" r="1.6" fill="#5a4a20" opacity=".85"/>
<circle cx="167.1" cy="20.3" r="3.1" fill="#a0a850" opacity=".85"/>
<circle cx="185.0" cy="16.6" r="3.0" fill="#6a7830" opacity=".85"/>
<circle cx="28.9" cy="108.8" r="2.2" fill="#b04a28" opacity=".85"/>
<circle cx="88.6" cy="134.2" r="1.8" fill="#8a5a28" opacity=".85"/>
<circle cx="43.7" cy="97.1" r="1.6" fill="#6a7a34" opacity=".85"/>
<circle cx="15.9" cy="14.9" r="2.2" fill="#7a7a30" opacity=".85"/>
<circle cx="35.1" cy="23.3" r="2.5" fill="#b0a850" opacity=".85"/>
<circle cx="13.1" cy="124.6" r="2.6" fill="#c87a30" opacity=".85"/>
<circle cx="103.7" cy="59.1" r="2.5" fill="#8a8a38" opacity=".85"/>
<circle cx="18.1" cy="69.6" r="1.5" fill="#7a7a30" opacity=".85"/>
<circle cx="49.7" cy="95.7" r="1.3" fill="#c0b050" opacity=".85"/>
<circle cx="193.7" cy="12.1" r="1.7" fill="#5a6428" opacity=".85"/>
<circle cx="58.3" cy="18.3" r="2.1" fill="#c8c468" opacity=".85"/>
<circle cx="106.1" cy="91.3" r="3.1" fill="#6a7a34" opacity=".85"/>
<circle cx="62.4" cy="94.4" r="1.2" fill="#b0a850" opacity=".85"/>
<circle cx="52.3" cy="142.3" r="2.1" fill="#6a7a34" opacity=".85"/>
<circle cx="173.9" cy="121.9" r="1.4" fill="#d8b848" opacity=".85"/>
<circle cx="117.2" cy="129.5" r="1.4" fill="#c07828" opacity=".85"/>
<circle cx="45.4" cy="113.7" r="2.0" fill="#c87a30" opacity=".85"/>
<circle cx="187.5" cy="66.1" r="2.9" fill="#c0c8a0" opacity=".85"/>
<circle cx="7.2" cy="165.0" r="1.9" fill="#e0b050" opacity=".85"/>
<circle cx="48.1" cy="57.0" r="3.2" fill="#c0b050" opacity=".85"/>
<circle cx="10.7" cy="88.0" r="3.1" fill="#b0a850" opacity=".85"/>
<circle cx="174.1" cy="112.7" r="1.4" fill="#c07828" opacity=".85"/>
<circle cx="13.9" cy="73.6" r="1.2" fill="#d8dcc0" opacity=".85"/>
<circle cx="84.1" cy="67.5" r="2.1" fill="#c8c468" opacity=".85"/>
<circle cx="176.9" cy="5.8" r="1.7" fill="#7a8838" opacity=".85"/>
<circle cx="124.7" cy="106.8" r="1.3" fill="#c8a838" opacity=".85"/>
<circle cx="50.1" cy="88.5" r="3.1" fill="#d8a848" opacity=".85"/>
<circle cx="22.6" cy="59.1" r="1.3" fill="#e8ecdc" opacity=".85"/>
<circle cx="180.3" cy="14.4" r="3.1" fill="#a0a850" opacity=".85"/>
<circle cx="24.8" cy="22.3" r="2.0" fill="#7a7a30" opacity=".85"/>
<circle cx="54.8" cy="125.1" r="1.8" fill="#5a4a20" opacity=".85"/>
<circle cx="122.0" cy="96.9" r="1.6" fill="#b89030" opacity=".85"/>
<circle cx="60.7" cy="81.2" r="1.3" fill="#c0b050" opacity=".85"/>
<circle cx="44.3" cy="87.1" r="2.4" fill="#c87a30" opacity=".85"/>
<circle cx="184.8" cy="27.6" r="1.8" fill="#5a6428" opacity=".85"/>
<circle cx="98.3" cy="48.4" r="1.8" fill="#c8c468" opacity=".85"/>
<circle cx="31.7" cy="11.4" r="2.1" fill="#c8c468" opacity=".85"/>
<circle cx="70.8" cy="129.7" r="3.2" fill="#b04a28" opacity=".85"/>
<circle cx="83.4" cy="113.6" r="1.6" fill="#d8a848" opacity=".85"/>
<circle cx="164.2" cy="88.0" r="2.7" fill="#d8b848" opacity=".85"/>
<circle cx="53.7" cy="107.2" r="2.6" fill="#e0b050" opacity=".85"/>
<circle cx="174.2" cy="0.7" r="2.4" fill="#a0a850" opacity=".85"/>
<circle cx="29.9" cy="144.5" r="2.4" fill="#d09a40" opacity=".85"/>
<circle cx="75.9" cy="76.9" r="2.6" fill="#7a7a30" opacity=".85"/>
<circle cx="70.6" cy="89.4" r="2.5" fill="#c87a30" opacity=".85"/>
<circle cx="99.9" cy="75.5" r="1.8" fill="#d8dcc0" opacity=".85"/>
<circle cx="87.1" cy="64.1" r="2.8" fill="#c0b050" opacity=".85"/>
<circle cx="64.8" cy="143.4" r="3.1" fill="#6a7a34" opacity=".85"/>
<circle cx="191.2" cy="4.3" r="3.0" fill="#5a6428" opacity=".85"/>
<circle cx="184.1" cy="131.5" r="3.2" fill="#6a5a28" opacity=".85"/>
<circle cx="165.1" cy="123.6" r="2.1" fill="#c8a838" opacity=".85"/>
<circle cx="189.6" cy="115.0" r="1.4" fill="#8a9a40" opacity=".85"/>
<circle cx="100.2" cy="110.3" r="1.5" fill="#6a7a34" opacity=".85"/>
<circle cx="192.9" cy="82.7" r="2.4" fill="#6a5a28" opacity=".85"/>
<circle cx="68.7" cy="90.1" r="1.5" fill="#c0b050" opacity=".85"/>
<circle cx="73.3" cy="12.8" r="1.6" fill="#7a7a30" opacity=".85"/>
<circle cx="84.2" cy="26.6" r="2.2" fill="#e8ecdc" opacity=".85"/>
<circle cx="178.6" cy="70.1" r="2.3" fill="#c8a838" opacity=".85"/>
<circle cx="82.3" cy="133.9" r="2.6" fill="#c87a30" opacity=".85"/>
<circle cx="183.4" cy="67.6" r="1.2" fill="#6a7830" opacity=".85"/>
<circle cx="39.3" cy="84.6" r="1.7" fill="#e8ecdc" opacity=".85"/>
<circle cx="39.7" cy="102.3" r="2.2" fill="#d09a40" opacity=".85"/>
<circle cx="5.8" cy="12.9" r="2.2" fill="#8a8a38" opacity=".85"/>
<circle cx="12.4" cy="2.1" r="1.8" fill="#b0a850" opacity=".85"/>
<circle cx="70.8" cy="28.8" r="1.4" fill="#d0d8b0" opacity=".85"/>
<circle cx="12.6" cy="32.6" r="1.2" fill="#b0a850" opacity=".85"/>
<circle cx="178.1" cy="99.1" r="2.1" fill="#6a5a28" opacity=".85"/>
<circle cx="47.7" cy="37.9" r="2.4" fill="#d8dcc0" opacity=".85"/>
<circle cx="163.2" cy="51.6" r="3.1" fill="#a0a850" opacity=".85"/>
<circle cx="195.9" cy="11.5" r="2.5" fill="#c0c8a0" opacity=".85"/>
<circle cx="44.3" cy="52.6" r="2.2" fill="#b0a850" opacity=".85"/>
<circle cx="17.5" cy="28.9" r="1.2" fill="#7a7a30" opacity=".85"/>
<circle cx="79.2" cy="61.7" r="2.9" fill="#c0b050" opacity=".85"/>
<circle cx="24.7" cy="140.4" r="1.7" fill="#6a7a34" opacity=".85"/>
<circle cx="93.4" cy="58.6" r="1.8" fill="#c8c468" opacity=".85"/>
<circle cx="68.3" cy="26.5" r="1.4" fill="#7a7a30" opacity=".85"/>
<circle cx="109.0" cy="133.9" r="2.1" fill="#6a7a34" opacity=".85"/>
<circle cx="31.8" cy="60.0" r="2.0" fill="#d0d8b0" opacity=".85"/>
<circle cx="141.3" cy="44.3" r="2.4" fill="#5a6428" opacity=".85"/>
<circle cx="106.9" cy="68.7" r="1.5" fill="#9c9a40" opacity=".85"/>
<circle cx="170.4" cy="125.1" r="1.3" fill="#b89030" opacity=".85"/>
<circle cx="78.0" cy="14.6" r="2.9" fill="#c0b050" opacity=".85"/>
<circle cx="37.7" cy="151.5" r="3.0" fill="#d8a848" opacity=".85"/>
<circle cx="38.6" cy="122.2" r="1.8" fill="#e0b050" opacity=".85"/>
<circle cx="56.5" cy="68.6" r="2.7" fill="#d8dcc0" opacity=".85"/>
<circle cx="187.3" cy="30.0" r="2.8" fill="#7a8838" opacity=".85"/>
<circle cx="70.3" cy="70.1" r="2.6" fill="#b0a850" opacity=".85"/>
<circle cx="200.0" cy="68.1" r="1.4" fill="#5a6428" opacity=".85"/>
<circle cx="23.0" cy="155.2" r="2.6" fill="#c87a30" opacity=".85"/>
<circle cx="80.9" cy="103.5" r="2.7" fill="#b04a28" opacity=".85"/>
<circle cx="62.2" cy="108.5" r="2.9" fill="#5a4a20" opacity=".85"/>
<circle cx="143.3" cy="43.3" r="2.6" fill="#5a6428" opacity=".85"/>
<circle cx="187.1" cy="19.0" r="2.5" fill="#6a7830" opacity=".85"/>
<circle cx="175.0" cy="99.5" r="3.1" fill="#b89030" opacity=".85"/>
<circle cx="22.2" cy="134.5" r="3.0" fill="#d09a40" opacity=".85"/>
<circle cx="83.4" cy="126.5" r="2.4" fill="#6a7a34" opacity=".85"/>
<circle cx="56.2" cy="15.3" r="2.0" fill="#c0b050" opacity=".85"/>
<circle cx="138.3" cy="125.6" r="2.5" fill="#d8b848" opacity=".85"/>
<circle cx="101.7" cy="115.0" r="2.5" fill="#b04a28" opacity=".85"/>
<circle cx="32.7" cy="132.7" r="1.7" fill="#c87a30" opacity=".85"/>
<circle cx="33.6" cy="59.0" r="2.5" fill="#d8dcc0" opacity=".85"/>
<circle cx="27.3" cy="120.2" r="1.7" fill="#6a7a34" opacity=".85"/>
<circle cx="1.2" cy="117.6" r="2.5" fill="#d8a848" opacity=".85"/>
<circle cx="26.7" cy="120.3" r="1.7" fill="#d09a40" opacity=".85"/>
<circle cx="109.7" cy="129.3" r="2.5" fill="#5a4a20" opacity=".85"/>
<circle cx="167.9" cy="69.0" r="2.6" fill="#6a7830" opacity=".85"/>
<circle cx="72.1" cy="35.1" r="1.8" fill="#b0a850" opacity=".85"/>
<circle cx="22.1" cy="52.5" r="1.5" fill="#8a8a38" opacity=".85"/>
<circle cx="93.7" cy="61.7" r="1.3" fill="#c8c468" opacity=".85"/>
<circle cx="97.1" cy="127.0" r="2.7" fill="#d8a848" opacity=".85"/>
<circle cx="21.8" cy="83.1" r="1.6" fill="#8a5a28" opacity=".85"/>
<circle cx="1.7" cy="156.3" r="2.5" fill="#d8a848" opacity=".85"/>
<circle cx="79.1" cy="24.7" r="3.1" fill="#e8ecdc" opacity=".85"/>
<circle cx="33.7" cy="133.4" r="2.7" fill="#8a5a28" opacity=".85"/>
<circle cx="75.9" cy="110.0" r="1.7" fill="#b04a28" opacity=".85"/>
<circle cx="166.3" cy="40.7" r="2.3" fill="#7a8838" opacity=".85"/>
<circle cx="43.3" cy="71.9" r="3.2" fill="#d0d8b0" opacity=".85"/>
<circle cx="17.9" cy="6.8" r="1.6" fill="#c0b050" opacity=".85"/>
<circle cx="0.6" cy="142.9" r="2.8" fill="#e0b050" opacity=".85"/>
<circle cx="28.6" cy="12.2" r="2.6" fill="#c0b050" opacity=".85"/>
<circle cx="12.5" cy="1.5" r="1.6" fill="#d8dcc0" opacity=".85"/>
<circle cx="160.8" cy="114.8" r="2.1" fill="#6a5a28" opacity=".85"/>
<circle cx="64.7" cy="78.3" r="3.0" fill="#d8dcc0" opacity=".85"/>
<circle cx="12.0" cy="115.0" r="1.8" fill="#e0b050" opacity=".85"/>
<circle cx="190.6" cy="81.7" r="1.8" fill="#5a6428" opacity=".85"/>
<circle cx="106.1" cy="107.7" r="1.6" fill="#5a4a20" opacity=".85"/>
<circle cx="115.8" cy="94.3" r="1.9" fill="#c07828" opacity=".85"/>
<circle cx="22.9" cy="30.7" r="2.3" fill="#9c9a40" opacity=".85"/>
<circle cx="44.3" cy="142.3" r="1.6" fill="#d8a848" opacity=".85"/>
<circle cx="91.6" cy="92.0" r="2.7" fill="#d09a40" opacity=".85"/>
<circle cx="170.3" cy="115.5" r="1.5" fill="#6a5a28" opacity=".85"/>
<circle cx="110.1" cy="121.5" r="1.4" fill="#b89030" opacity=".85"/>
<circle cx="103.0" cy="78.2" r="2.3" fill="#b0a850" opacity=".85"/>
<circle cx="112.6" cy="131.7" r="2.8" fill="#c8a838" opacity=".85"/>
<circle cx="8.3" cy="119.3" r="2.1" fill="#d09a40" opacity=".85"/>
<circle cx="177.7" cy="105.6" r="2.3" fill="#b89030" opacity=".85"/>
<circle cx="174.2" cy="28.6" r="1.9" fill="#7a8838" opacity=".85"/>
<circle cx="24.5" cy="63.4" r="3.1" fill="#8a8a38" opacity=".85"/>
<circle cx="8.7" cy="102.6" r="2.3" fill="#d09a40" opacity=".85"/>
<circle cx="6.8" cy="154.7" r="1.9" fill="#5a4a20" opacity=".85"/>
<circle cx="88.0" cy="134.5" r="1.3" fill="#d8a848" opacity=".85"/>
<circle cx="37.1" cy="94.2" r="2.6" fill="#e0b050" opacity=".85"/>
<circle cx="167.2" cy="100.0" r="3.2" fill="#8a9a40" opacity=".85"/>
<circle cx="189.8" cy="2.3" r="1.5" fill="#c0c8a0" opacity=".85"/>
<circle cx="167.4" cy="12.7" r="2.5" fill="#c0c8a0" opacity=".85"/>
<circle cx="78.5" cy="80.9" r="2.9" fill="#e0b050" opacity=".85"/>
<circle cx="103.4" cy="61.4" r="1.8" fill="#d8dcc0" opacity=".85"/>
<circle cx="33.9" cy="61.4" r="2.4" fill="#e0e4d0" opacity=".85"/>
<circle cx="187.5" cy="53.4" r="2.2" fill="#8a9a48" opacity=".85"/>
<circle cx="4.1" cy="78.1" r="1.3" fill="#d8dcc0" opacity=".85"/>
<circle cx="76.9" cy="10.8" r="1.9" fill="#d0d8b0" opacity=".85"/>
<circle cx="198.4" cy="5.8" r="2.7" fill="#8a9a48" opacity=".85"/>
<circle cx="154.9" cy="107.6" r="1.9" fill="#8a9a40" opacity=".85"/>
<circle cx="158.6" cy="40.5" r="1.5" fill="#6a7830" opacity=".85"/>
<circle cx="60.8" cy="129.8" r="2.2" fill="#6a7a34" opacity=".85"/>
<circle cx="70.1" cy="93.6" r="1.3" fill="#8a5a28" opacity=".85"/>
<circle cx="156.5" cy="85.6" r="2.8" fill="#5a6428" opacity=".85"/>
<circle cx="30.2" cy="34.9" r="2.5" fill="#e0e4d0" opacity=".85"/>
<circle cx="89.1" cy="96.7" r="1.5" fill="#d09a40" opacity=".85"/>
<circle cx="28.8" cy="122.4" r="2.3" fill="#8a5a28" opacity=".85"/>
<circle cx="14.7" cy="32.3" r="2.4" fill="#7a7a30" opacity=".85"/>
<circle cx="71.4" cy="131.7" r="2.9" fill="#d09a40" opacity=".85"/>
<circle cx="167.7" cy="54.3" r="3.0" fill="#c0c8a0" opacity=".85"/>
<circle cx="4.6" cy="28.0" r="2.6" fill="#b0a850" opacity=".85"/>
<circle cx="9.5" cy="76.1" r="1.8" fill="#e8ecdc" opacity=".85"/>
<circle cx="68.2" cy="23.2" r="2.3" fill="#c8c468" opacity=".85"/>
<circle cx="42.4" cy="55.5" r="2.5" fill="#e0e4d0" opacity=".85"/>
<circle cx="34.9" cy="146.8" r="1.4" fill="#8a5a28" opacity=".85"/>
<circle cx="174.7" cy="4.4" r="2.5" fill="#5a6428" opacity=".85"/>
<circle cx="11.2" cy="104.4" r="1.9" fill="#d09a40" opacity=".85"/>
<circle cx="3.7" cy="35.8" r="2.9" fill="#c0b050" opacity=".85"/>
<circle cx="162.8" cy="71.9" r="2.4" fill="#c0c8a0" opacity=".85"/>
<circle cx="129.5" cy="110.8" r="2.6" fill="#6a5a28" opacity=".85"/>
<circle cx="55.7" cy="89.0" r="1.5" fill="#c8c468" opacity=".85"/>
<circle cx="30.1" cy="106.9" r="3.2" fill="#c87a30" opacity=".85"/>
<circle cx="155.5" cy="44.0" r="2.7" fill="#8a9a48" opacity=".85"/>
<circle cx="155.8" cy="89.8" r="2.6" fill="#d8b848" opacity=".85"/>
<circle cx="196.5" cy="84.8" r="1.9" fill="#d8b848" opacity=".85"/>
<circle cx="92.0" cy="55.1" r="1.4" fill="#c8c468" opacity=".85"/>
<circle cx="13.1" cy="109.7" r="2.9" fill="#c87a30" opacity=".85"/>
<circle cx="45.6" cy="63.9" r="2.0" fill="#b0a850" opacity=".85"/>
<circle cx="6.1" cy="3.5" r="1.7" fill="#c0b050" opacity=".85"/>
<circle cx="40.6" cy="129.1" r="1.8" fill="#5a4a20" opacity=".85"/>
<circle cx="43.3" cy="96.8" r="2.9" fill="#d8a848" opacity=".85"/>
<circle cx="190.9" cy="23.2" r="1.4" fill="#6a7830" opacity=".85"/>
<circle cx="32.3" cy="116.1" r="2.1" fill="#c87a30" opacity=".85"/>
<circle cx="176.6" cy="35.7" r="1.9" fill="#a0a850" opacity=".85"/>
<circle cx="36.5" cy="146.9" r="1.8" fill="#c87a30" opacity=".85"/>
<circle cx="161.0" cy="25.8" r="1.5" fill="#5a6428" opacity=".85"/>
<circle cx="30.2" cy="125.1" r="1.5" fill="#e0b050" opacity=".85"/>
<circle cx="18.0" cy="57.7" r="2.6" fill="#c0b050" opacity=".85"/>
<circle cx="195.9" cy="5.6" r="2.8" fill="#7a8838" opacity=".85"/>
<circle cx="3.1" cy="22.9" r="2.3" fill="#9c9a40" opacity=".85"/>
<circle cx="178.8" cy="11.0" r="3.1" fill="#8a9a48" opacity=".85"/>
<circle cx="44.8" cy="91.9" r="2.3" fill="#d09a40" opacity=".85"/>
<circle cx="191.4" cy="13.1" r="2.9" fill="#8a9a48" opacity=".85"/>
<circle cx="146.3" cy="46.4" r="1.7" fill="#6a7830" opacity=".85"/>
<circle cx="193.3" cy="33.4" r="2.8" fill="#5a6428" opacity=".85"/>
<circle cx="53.4" cy="55.4" r="2.1" fill="#7a7a30" opacity=".85"/>
<circle cx="109.8" cy="117.3" r="2.9" fill="#b89030" opacity=".85"/>
<circle cx="53.7" cy="71.7" r="2.0" fill="#d8dcc0" opacity=".85"/>
<circle cx="77.4" cy="65.5" r="1.5" fill="#c8c468" opacity=".85"/>
<circle cx="47.8" cy="85.2" r="2.6" fill="#e0e4d0" opacity=".85"/>
<circle cx="111.7" cy="116.4" r="2.5" fill="#d8b848" opacity=".85"/>
<circle cx="194.3" cy="0.2" r="2.9" fill="#c0c8a0" opacity=".85"/>
<circle cx="68.5" cy="92.9" r="2.8" fill="#e0b050" opacity=".85"/>
<circle cx="71.0" cy="10.9" r="1.7" fill="#c0b050" opacity=".85"/>
<circle cx="14.4" cy="135.5" r="3.0" fill="#d8a848" opacity=".85"/>
<circle cx="52.5" cy="143.0" r="1.9" fill="#5a4a20" opacity=".85"/>
<circle cx="13.2" cy="128.7" r="1.6" fill="#b04a28" opacity=".85"/>
<circle cx="162.7" cy="40.6" r="2.8" fill="#a0a850" opacity=".85"/>
<circle cx="171.2" cy="110.9" r="1.8" fill="#8a9a40" opacity=".85"/>
<circle cx="24.6" cy="26.2" r="1.4" fill="#c0b050" opacity=".85"/>
<circle cx="132.6" cy="88.8" r="2.5" fill="#8a9a40" opacity=".85"/>
<circle cx="139.0" cy="76.4" r="2.8" fill="#c0c8a0" opacity=".85"/>
<circle cx="30.0" cy="115.6" r="2.2" fill="#6a7a34" opacity=".85"/>
<circle cx="124.5" cy="89.0" r="1.7" fill="#c0c8a0" opacity=".85"/>
<circle cx="40.2" cy="97.0" r="1.6" fill="#d8a848" opacity=".85"/>
<circle cx="183.4" cy="43.5" r="2.1" fill="#c0c8a0" opacity=".85"/>
<circle cx="40.3" cy="71.9" r="2.4" fill="#c0b050" opacity=".85"/>
<circle cx="184.1" cy="122.0" r="1.3" fill="#8a9a40" opacity=".85"/>
<circle cx="194.0" cy="73.3" r="1.7" fill="#8a9a48" opacity=".85"/>
<circle cx="77.1" cy="98.4" r="1.6" fill="#8a5a28" opacity=".85"/>
<circle cx="12.7" cy="34.5" r="1.4" fill="#8a8a38" opacity=".85"/>
<circle cx="75.9" cy="89.4" r="3.0" fill="#c87a30" opacity=".85"/>
<circle cx="21.6" cy="95.8" r="2.6" fill="#e0e4d0" opacity=".85"/>
<circle cx="83.0" cy="80.5" r="2.1" fill="#8a8a38" opacity=".85"/>
<circle cx="27.1" cy="128.0" r="1.7" fill="#6a7a34" opacity=".85"/>
<circle cx="136.0" cy="94.2" r="2.7" fill="#c8a838" opacity=".85"/>
<circle cx="18.0" cy="144.1" r="1.2" fill="#5a4a20" opacity=".85"/>
<circle cx="17.7" cy="128.1" r="1.3" fill="#6a7a34" opacity=".85"/>
<circle cx="142.2" cy="82.1" r="2.6" fill="#d8b848" opacity=".85"/>
<circle cx="168.7" cy="23.8" r="1.3" fill="#7a8838" opacity=".85"/>
<circle cx="29.1" cy="56.8" r="1.2" fill="#e8ecdc" opacity=".85"/>
<circle cx="54.9" cy="44.6" r="1.7" fill="#7a7a30" opacity=".85"/>
<circle cx="60.9" cy="147.4" r="2.9" fill="#d8a848" opacity=".85"/>
<circle cx="61.0" cy="22.4" r="2.5" fill="#8a8a38" opacity=".85"/>
<circle cx="131.3" cy="120.7" r="3.1" fill="#8a9a40" opacity=".85"/>
<circle cx="40.1" cy="156.3" r="1.3" fill="#8a5a28" opacity=".85"/>
<circle cx="1.7" cy="11.5" r="2.8" fill="#c8c468" opacity=".85"/>
<circle cx="54.7" cy="135.3" r="2.6" fill="#5a4a20" opacity=".85"/>
<circle cx="81.2" cy="123.7" r="1.6" fill="#b04a28" opacity=".85"/>
<circle cx="86.7" cy="108.7" r="2.9" fill="#d09a40" opacity=".85"/>
<circle cx="162.9" cy="84.5" r="2.6" fill="#b89030" opacity=".85"/>
<circle cx="160.1" cy="84.7" r="2.5" fill="#5a6428" opacity=".85"/>
<circle cx="160.4" cy="90.9" r="2.8" fill="#b89030" opacity=".85"/>
<circle cx="41.4" cy="17.1" r="2.8" fill="#c8c468" opacity=".85"/>
<circle cx="82.9" cy="112.0" r="3.0" fill="#e0b050" opacity=".85"/>
<circle cx="31.0" cy="9.6" r="1.3" fill="#8a8a38" opacity=".85"/>
<circle cx="58.7" cy="39.6" r="1.8" fill="#e8ecdc" opacity=".85"/>
<circle cx="143.9" cy="52.6" r="2.3" fill="#8a9a48" opacity=".85"/>
<circle cx="30.4" cy="135.9" r="2.0" fill="#c87a30" opacity=".85"/>
<circle cx="65.5" cy="26.5" r="2.5" fill="#9c9a40" opacity=".85"/>
<circle cx="39.6" cy="25.3" r="1.9" fill="#e0e4d0" opacity=".85"/>
<circle cx="22.9" cy="140.8" r="3.0" fill="#d09a40" opacity=".85"/>
<circle cx="58.2" cy="59.2" r="2.2" fill="#9c9a40" opacity=".85"/>
<circle cx="40.1" cy="47.6" r="2.4" fill="#9c9a40" opacity=".85"/>
<circle cx="40.3" cy="80.0" r="2.7" fill="#b0a850" opacity=".85"/>
<circle cx="0.3" cy="33.0" r="1.8" fill="#d8dcc0" opacity=".85"/>
<circle cx="66.6" cy="76.4" r="2.7" fill="#d8dcc0" opacity=".85"/>
<circle cx="21.9" cy="141.4" r="2.6" fill="#5a4a20" opacity=".85"/>
<circle cx="19.1" cy="93.8" r="2.4" fill="#5a4a20" opacity=".85"/>
<circle cx="7.2" cy="6.7" r="2.0" fill="#d8dcc0" opacity=".85"/>
<circle cx="83.1" cy="142.3" r="2.7" fill="#b04a28" opacity=".85"/>
<circle cx="71.9" cy="112.7" r="1.2" fill="#5a4a20" opacity=".85"/>
<circle cx="60.7" cy="44.4" r="1.7" fill="#d8dcc0" opacity=".85"/>
<circle cx="99.2" cy="91.1" r="2.1" fill="#b04a28" opacity=".85"/>
<circle cx="56.7" cy="94.4" r="3.0" fill="#e8ecdc" opacity=".85"/>
<circle cx="3.0" cy="160.4" r="2.8" fill="#6a7a34" opacity=".85"/>
<circle cx="150.0" cy="26.1" r="1.3" fill="#a0a850" opacity=".85"/>
<circle cx="48.7" cy="131.7" r="2.8" fill="#6a7a34" opacity=".85"/>
<circle cx="14.6" cy="57.3" r="1.6" fill="#d8dcc0" opacity=".85"/>
<circle cx="162.9" cy="58.2" r="2.1" fill="#8a9a48" opacity=".85"/>
<circle cx="2.2" cy="159.9" r="2.0" fill="#d09a40" opacity=".85"/>
<circle cx="157.7" cy="25.2" r="1.5" fill="#5a6428" opacity=".85"/>
<circle cx="154.0" cy="34.6" r="2.6" fill="#7a8838" opacity=".85"/>
<circle cx="158.3" cy="81.6" r="2.8" fill="#c8a838" opacity=".85"/>
<circle cx="150.3" cy="108.2" r="2.5" fill="#8a9a40" opacity=".85"/>
<circle cx="157.3" cy="15.7" r="1.9" fill="#8a9a48" opacity=".85"/>
<circle cx="160.7" cy="83.7" r="2.2" fill="#5a6428" opacity=".85"/>
<circle cx="181.0" cy="126.6" r="2.8" fill="#6a5a28" opacity=".85"/>
<circle cx="32.9" cy="65.6" r="3.1" fill="#e8ecdc" opacity=".85"/>
<circle cx="157.5" cy="42.8" r="1.7" fill="#8a9a48" opacity=".85"/>
<circle cx="117.5" cy="95.5" r="2.4" fill="#b89030" opacity=".85"/>
<circle cx="177.9" cy="8.5" r="2.0" fill="#7a8838" opacity=".85"/>
<circle cx="165.2" cy="69.1" r="2.5" fill="#8a9a40" opacity=".85"/>
<circle cx="85.3" cy="51.8" r="2.4" fill="#9c9a40" opacity=".85"/>
<circle cx="175.6" cy="80.8" r="1.8" fill="#c07828" opacity=".85"/>
<circle cx="67.1" cy="36.3" r="2.9" fill="#d0d8b0" opacity=".85"/>
<circle cx="6.5" cy="57.1" r="1.6" fill="#8a8a38" opacity=".85"/>
<circle cx="81.5" cy="91.5" r="1.6" fill="#c87a30" opacity=".85"/>
<circle cx="77.9" cy="56.6" r="1.5" fill="#c0b050" opacity=".85"/>
<circle cx="178.0" cy="103.7" r="2.0" fill="#d8b848" opacity=".85"/>
<circle cx="63.7" cy="149.0" r="2.4" fill="#b04a28" opacity=".85"/>
<circle cx="170.7" cy="17.6" r="2.3" fill="#7a8838" opacity=".85"/>
<circle cx="50.2" cy="59.9" r="2.3" fill="#e8ecdc" opacity=".85"/>
<circle cx="150.7" cy="43.1" r="2.2" fill="#5a6428" opacity=".85"/>
<circle cx="72.4" cy="112.4" r="2.0" fill="#c87a30" opacity=".85"/>
<circle cx="181.4" cy="84.7" r="3.2" fill="#c8a838" opacity=".85"/>
<circle cx="23.8" cy="64.1" r="2.2" fill="#d8dcc0" opacity=".85"/>
<circle cx="145.8" cy="127.5" r="1.9" fill="#c07828" opacity=".85"/>
<circle cx="1.4" cy="159.2" r="1.6" fill="#c87a30" opacity=".85"/>
<circle cx="199.5" cy="29.5" r="3.2" fill="#7a8838" opacity=".85"/>
<circle cx="152.5" cy="49.5" r="2.0" fill="#a0a850" opacity=".85"/>
<circle cx="192.6" cy="120.6" r="1.8" fill="#c07828" opacity=".85"/>
<circle cx="166.7" cy="84.3" r="2.3" fill="#c07828" opacity=".85"/>
<circle cx="40.2" cy="137.3" r="1.8" fill="#b04a28" opacity=".85"/>
<circle cx="155.4" cy="61.2" r="1.7" fill="#a0a850" opacity=".85"/>
<circle cx="39.5" cy="54.6" r="1.4" fill="#7a7a30" opacity=".85"/>
<circle cx="72.4" cy="54.3" r="2.1" fill="#9c9a40" opacity=".85"/>
<circle cx="40.8" cy="154.5" r="2.9" fill="#b04a28" opacity=".85"/>
<circle cx="155.7" cy="53.5" r="2.7" fill="#a0a850" opacity=".85"/>
<circle cx="78.3" cy="121.9" r="2.8" fill="#d09a40" opacity=".85"/>
<circle cx="51.9" cy="131.1" r="2.9" fill="#d8a848" opacity=".85"/>
<circle cx="53.1" cy="41.4" r="2.3" fill="#d0d8b0" opacity=".85"/>
<circle cx="161.6" cy="18.9" r="2.5" fill="#7a8838" opacity=".85"/>
<circle cx="126.8" cy="117.6" r="2.0" fill="#b89030" opacity=".85"/>
<circle cx="167.8" cy="68.0" r="1.9" fill="#8a9a48" opacity=".85"/>
<circle cx="147.1" cy="70.3" r="1.8" fill="#8a9a48" opacity=".85"/>
<circle cx="67.7" cy="11.2" r="2.2" fill="#d0d8b0" opacity=".85"/>
<circle cx="133.6" cy="98.2" r="2.3" fill="#8a9a40" opacity=".85"/>
<circle cx="157.0" cy="115.5" r="1.5" fill="#c07828" opacity=".85"/>
<circle cx="134.3" cy="128.2" r="3.0" fill="#c8a838" opacity=".85"/>
<path d="M200,45 L150,30 M200,80 L160,62 M175,95 L150,78" stroke="#3a3a20" stroke-width="1.2" opacity=".6"/>
<path d="M38,40 L40,160" stroke="#2e2818" stroke-width="2.1" opacity=".6"/>
<path d="M50,60 L50,150" stroke="#2e2818" stroke-width="1.6" opacity=".6"/>
<path d="M30,90 L42,150" stroke="#2e2818" stroke-width="1.3" opacity=".6"/>
<path d="M63,40 L65,150" stroke="#2e2818" stroke-width="1.8" opacity=".6"/>
<path d="M78,30 L79,145" stroke="#2e2818" stroke-width="2.1" opacity=".6"/>
<path d="M91,60 L92,140" stroke="#2e2818" stroke-width="1.3" opacity=".6"/>
<path d="M20,20 L36,40" stroke="#2e2818" stroke-width="1.2" opacity=".6"/>
<path d="M45,70 L38,40" stroke="#2e2818" stroke-width="1.0" opacity=".6"/>
<path d="M137,137 L200,168 V140 L160,134 Z" fill="#5a4a2c"/>
<circle cx="182.2" cy="154.8" r="1.1" fill="#7a5a30" opacity=".8"/>
<circle cx="186.3" cy="154.6" r="1.4" fill="#8a7a40" opacity=".8"/>
<circle cx="194.2" cy="144.5" r="1.2" fill="#7a5a30" opacity=".8"/>
<circle cx="159.5" cy="134.1" r="1.6" fill="#8a7a40" opacity=".8"/>
<circle cx="198.6" cy="154.1" r="1.5" fill="#7a5a30" opacity=".8"/>
<circle cx="177.8" cy="145.6" r="1.2" fill="#8a7a40" opacity=".8"/>
<circle cx="188.5" cy="152.3" r="0.8" fill="#8a7a40" opacity=".8"/>
<circle cx="165.4" cy="136.1" r="1.6" fill="#7a5a30" opacity=".8"/>
<circle cx="175.1" cy="147.6" r="1.4" fill="#a07040" opacity=".8"/>
<circle cx="199.7" cy="161.3" r="2.0" fill="#4a3a24" opacity=".8"/>
<circle cx="179.5" cy="142.6" r="1.6" fill="#8a7a40" opacity=".8"/>
<circle cx="192.8" cy="155.0" r="1.0" fill="#8a7a40" opacity=".8"/>
<circle cx="146.7" cy="139.6" r="1.7" fill="#7a5a30" opacity=".8"/>
<circle cx="184.2" cy="151.6" r="1.3" fill="#8a7a40" opacity=".8"/>
<circle cx="187.4" cy="159.3" r="1.7" fill="#8a7a40" opacity=".8"/>
<circle cx="198.4" cy="159.4" r="1.9" fill="#7a5a30" opacity=".8"/>
<circle cx="183.3" cy="155.4" r="1.1" fill="#4a3a24" opacity=".8"/>
<circle cx="177.7" cy="153.2" r="1.2" fill="#4a3a24" opacity=".8"/>
<circle cx="158.3" cy="135.5" r="1.0" fill="#4a3a24" opacity=".8"/>
<circle cx="165.3" cy="135.0" r="1.7" fill="#7a5a30" opacity=".8"/>
<circle cx="169.2" cy="136.8" r="1.2" fill="#4a3a24" opacity=".8"/>
<circle cx="147.7" cy="137.7" r="1.5" fill="#a07040" opacity=".8"/>
<circle cx="152.6" cy="142.6" r="0.8" fill="#8a7a40" opacity=".8"/>
<circle cx="198.8" cy="148.8" r="1.7" fill="#a07040" opacity=".8"/>
<circle cx="166.2" cy="138.7" r="0.9" fill="#a07040" opacity=".8"/>
<circle cx="198.4" cy="136.9" r="1.7" fill="#8a7a40" opacity=".8"/>
<circle cx="193.3" cy="152.2" r="0.9" fill="#4a3a24" opacity=".8"/>
<circle cx="194.2" cy="134.2" r="1.0" fill="#4a3a24" opacity=".8"/>
<circle cx="163.0" cy="137.5" r="1.5" fill="#8a7a40" opacity=".8"/>
<circle cx="196.7" cy="149.0" r="1.5" fill="#a07040" opacity=".8"/>
<circle cx="185.7" cy="153.4" r="1.7" fill="#a07040" opacity=".8"/>
<circle cx="183.0" cy="150.0" r="1.9" fill="#8a7a40" opacity=".8"/>
<circle cx="184.7" cy="141.6" r="1.7" fill="#7a5a30" opacity=".8"/>
<circle cx="152.0" cy="134.0" r="1.4" fill="#a07040" opacity=".8"/>
<circle cx="195.8" cy="155.7" r="1.9" fill="#4a3a24" opacity=".8"/>
<path d="M0,172 L112,139 L117,136 L0,200 Z" fill="#5e7a32"/>
<path d="M0,166 L112,138 L113,141 L0,176 Z" fill="#b4bc9c"/>
<circle cx="10.8" cy="164.4" r="1.3" fill="#d8dcc0"/>
<circle cx="57.4" cy="152.2" r="1.6" fill="#8a9a70"/>
<circle cx="102.6" cy="140.3" r="1.7" fill="#d8dcc0"/>
<circle cx="72.6" cy="148.3" r="1.4" fill="#d8dcc0"/>
<circle cx="66.6" cy="153.4" r="0.9" fill="#c8d0b0"/>
<circle cx="74.1" cy="150.4" r="1.3" fill="#d8dcc0"/>
<circle cx="0.9" cy="171.7" r="0.8" fill="#d8dcc0"/>
<circle cx="90.9" cy="145.1" r="0.9" fill="#d8dcc0"/>
<circle cx="82.4" cy="148.3" r="1.8" fill="#d8dcc0"/>
<circle cx="109.4" cy="140.4" r="1.2" fill="#c8d0b0"/>
<circle cx="9.8" cy="165.3" r="1.7" fill="#c8d0b0"/>
<circle cx="10.1" cy="165.6" r="1.1" fill="#8a9a70"/>
<circle cx="16.6" cy="166.3" r="1.8" fill="#c8d0b0"/>
<circle cx="0.8" cy="166.4" r="0.9" fill="#d8dcc0"/>
<circle cx="85.9" cy="145.4" r="1.2" fill="#8a9a70"/>
<circle cx="103.5" cy="142.1" r="1.0" fill="#d8dcc0"/>
<circle cx="84.2" cy="145.3" r="0.8" fill="#c8d0b0"/>
<circle cx="80.3" cy="146.1" r="1.5" fill="#8a9a70"/>
<circle cx="89.7" cy="143.8" r="1.4" fill="#8a9a70"/>
<circle cx="49.5" cy="157.7" r="1.1" fill="#8a9a70"/>
<circle cx="94.8" cy="142.4" r="1.2" fill="#c8d0b0"/>
<circle cx="49.6" cy="159.3" r="1.5" fill="#8a9a70"/>
<circle cx="85.4" cy="148.2" r="1.8" fill="#8a9a70"/>
<circle cx="30.7" cy="160.0" r="1.2" fill="#c8d0b0"/>
<circle cx="38.2" cy="159.9" r="1.2" fill="#8a9a70"/>
<circle cx="0.2" cy="172.1" r="1.0" fill="#8a9a70"/>
<circle cx="89.0" cy="145.9" r="0.9" fill="#8a9a70"/>
<circle cx="47.6" cy="156.1" r="0.9" fill="#c8d0b0"/>
<circle cx="108.2" cy="139.5" r="1.3" fill="#d8dcc0"/>
<circle cx="74.3" cy="148.6" r="1.7" fill="#d8dcc0"/>
<circle cx="77.3" cy="151.1" r="0.9" fill="#c8d0b0"/>
<circle cx="24.4" cy="165.1" r="1.7" fill="#d8dcc0"/>
<circle cx="29.1" cy="163.5" r="1.8" fill="#c8d0b0"/>
<circle cx="68.4" cy="151.9" r="1.0" fill="#d8dcc0"/>
<circle cx="31.8" cy="160.6" r="1.1" fill="#c8d0b0"/>
<circle cx="10.3" cy="170.0" r="1.4" fill="#d8dcc0"/>
<circle cx="108.0" cy="141.0" r="1.4" fill="#d8dcc0"/>
<circle cx="7.8" cy="164.6" r="1.2" fill="#c8d0b0"/>
<circle cx="7.2" cy="164.7" r="0.8" fill="#8a9a70"/>
<circle cx="8.3" cy="168.2" r="1.5" fill="#d8dcc0"/>
<circle cx="111.5" cy="141.5" r="0.8" fill="#4a6a28"/>
<circle cx="20.5" cy="171.2" r="0.9" fill="#4a6a28"/>
<circle cx="80.1" cy="152.0" r="1.5" fill="#c87a30"/>
<circle cx="99.1" cy="146.3" r="0.9" fill="#c87a30"/>
<circle cx="3.5" cy="191.0" r="0.8" fill="#c87a30"/>
<circle cx="92.3" cy="149.7" r="0.8" fill="#c87a30"/>
<circle cx="97.3" cy="145.8" r="0.7" fill="#8aa040"/>
<circle cx="76.1" cy="154.3" r="0.8" fill="#c87a30"/>
<circle cx="16.5" cy="172.5" r="1.5" fill="#4a6a28"/>
<circle cx="29.2" cy="168.2" r="1.1" fill="#c87a30"/>
<circle cx="7.5" cy="173.9" r="1.4" fill="#c87a30"/>
<circle cx="107.6" cy="142.8" r="1.1" fill="#c87a30"/>
<circle cx="15.9" cy="184.6" r="0.8" fill="#4a6a28"/>
<circle cx="19.1" cy="181.1" r="1.4" fill="#c87a30"/>
<circle cx="32.8" cy="171.2" r="1.3" fill="#c87a30"/>
<circle cx="74.6" cy="158.9" r="1.3" fill="#4a6a28"/>
<circle cx="27.7" cy="180.9" r="0.8" fill="#c87a30"/>
<circle cx="5.8" cy="186.8" r="1.4" fill="#c87a30"/>
<circle cx="32.4" cy="172.6" r="1.0" fill="#c87a30"/>
<circle cx="52.9" cy="167.1" r="0.7" fill="#c87a30"/>
<circle cx="55.8" cy="168.0" r="1.4" fill="#4a6a28"/>
<circle cx="50.6" cy="161.5" r="0.7" fill="#4a6a28"/>
<circle cx="51.1" cy="162.7" r="0.9" fill="#c87a30"/>
<circle cx="8.2" cy="177.6" r="1.3" fill="#8aa040"/>
<circle cx="70.3" cy="161.8" r="1.4" fill="#4a6a28"/>
<circle cx="12.7" cy="188.8" r="1.1" fill="#c87a30"/>
<circle cx="60.0" cy="162.1" r="0.9" fill="#c87a30"/>
<circle cx="9.6" cy="177.9" r="1.4" fill="#4a6a28"/>
<circle cx="90.3" cy="148.3" r="1.3" fill="#8aa040"/>
<circle cx="36.5" cy="167.4" r="1.2" fill="#4a6a28"/>
<circle cx="7.8" cy="186.7" r="1.0" fill="#4a6a28"/>
<circle cx="20.7" cy="169.7" r="1.2" fill="#8aa040"/>
<circle cx="103.8" cy="144.8" r="1.2" fill="#c87a30"/>
<circle cx="61.8" cy="158.8" r="1.0" fill="#8aa040"/>
<circle cx="16.0" cy="177.3" r="0.9" fill="#4a6a28"/>
<circle cx="85.1" cy="153.8" r="0.9" fill="#8aa040"/>
<circle cx="20.9" cy="173.2" r="1.1" fill="#8aa040"/>
<circle cx="9.4" cy="177.0" r="0.6" fill="#4a6a28"/>
<circle cx="112.2" cy="141.3" r="0.9" fill="#4a6a28"/>
<circle cx="67.1" cy="162.8" r="1.0" fill="#8aa040"/>
<circle cx="19.0" cy="176.1" r="1.0" fill="#c87a30"/>
<circle cx="54.9" cy="164.2" r="1.5" fill="#4a6a28"/>
<circle cx="77.3" cy="153.2" r="1.4" fill="#c87a30"/>
<circle cx="95.9" cy="146.6" r="1.5" fill="#4a6a28"/>
<circle cx="31.2" cy="180.5" r="1.3" fill="#c87a30"/>
<circle cx="46.8" cy="165.4" r="1.2" fill="#c87a30"/>
<circle cx="65.4" cy="162.2" r="0.8" fill="#c87a30"/>
<circle cx="17.8" cy="184.1" r="1.1" fill="#4a6a28"/>
<circle cx="64.6" cy="162.0" r="0.7" fill="#c87a30"/>
<circle cx="64.6" cy="158.2" r="1.0" fill="#c87a30"/>
<path d="M0,200 L0,198 L117,136 Q110,134 103,135 L130,134.5 Q135,135 137,137 L200,168 V200 Z" fill="url(#p1road)"/>
<path d="M0,199 L117,136" stroke="#e6e6e6" stroke-width="1.3"/>
<path d="M137,137 L200,168" stroke="#d8d8d8" stroke-width="1.1"/>
<path d="M127.5,137 L138.5,200 M130,137 L150,200" stroke="#e0a820" stroke-width="2.1"/>
</svg>
<!-- photo 2 -->
<svg style="left:904px;top:738px;overflow:hidden" width="200" height="200" viewBox="0 0 200 200">
<defs>
<linearGradient id="p2sky" x1="0" y1="0" x2="0" y2="1"><stop offset="0" stop-color="#7698d6"/><stop offset=".45" stop-color="#a4bde4"/><stop offset=".8" stop-color="#c4d6ec"/><stop offset="1" stop-color="#d4dde8"/></linearGradient>
<linearGradient id="p2arch" x1="0" y1="0" x2="1" y2="1"><stop offset="0" stop-color="#b65a3c"/><stop offset=".5" stop-color="#c46848"/><stop offset="1" stop-color="#c86c4a"/></linearGradient>
<filter id="p2b" x="-20%" y="-50%" width="140%" height="200%"><feGaussianBlur stdDeviation="2.5"/></filter>
<clipPath id="p2clip"><path d="M82,127 L84,95 L89,85 L88,70 L91,55 L96,40 L103,27 L106,23 L140,22 L160,28 L160,37 L170,58 L180,62 L189,72 L197,85 L200,95 V127 H150 L152,92 L151,85 L148,72 L140,62 L131,54 L122,55 L113,62 L104,86 L108,100 L111,110 L111,127 Z"/></clipPath>
</defs>
<rect width="200" height="200" fill="url(#p2sky)"/>
<g filter="url(#p2b)">
<ellipse cx="40" cy="26" rx="50" ry="14" fill="#9aa2b8"/>
<ellipse cx="60" cy="34" rx="38" ry="8" fill="#c8ccd8"/>
<ellipse cx="15" cy="12" rx="25" ry="6" fill="#d0d8e8"/>
<ellipse cx="70" cy="52" rx="30" ry="5" fill="#b8c4d8"/>
<ellipse cx="35" cy="76" rx="45" ry="4" fill="#8a94ac"/>
<ellipse cx="110" cy="84" rx="60" ry="4" fill="#e4e6ee"/>
<ellipse cx="190" cy="75" rx="14" ry="3" fill="#8a94ac"/>
</g>
<path d="M0,88 L8,86 L18,87 L28,86 L40,88 L55,90 L68,86 L80,87 L95,89 L110,86 L125,87 L140,90 L155,89 L170,87 L190,86 L200,86 V102 H0 Z" fill="#7e7a90"/>
<path d="M0,88 L8,86 L18,87 L28,86 L40,88 L30,90 L18,89 Z M68,86 L80,87 L72,89 Z" fill="#c8c4cc" opacity=".8"/>
<path d="M0,98 L30,97 L60,94 L90,95 L130,95 L160,91 L200,85 V200 H0 Z" fill="#52382e"/>
<path d="M0,103 L40,100 L70,98 L90,100 V200 H0 Z" fill="#5e3e30"/>
<path d="M8,122 L10,108 L14,106 L20,113 L32,112 L40,120 L50,121 L70,120 L85,118 V200 H0 V122 Z" fill="#85503a"/>
<path d="M0,120 H200 V200 H0 Z" fill="#9a5a40" opacity=".7"/>
<path d="M82,127 L84,95 L89,85 L88,70 L91,55 L96,40 L103,27 L106,23 L140,22 L160,28 L160,37 L170,58 L180,62 L189,72 L197,85 L200,95 V127 H150 L152,92 L151,85 L148,72 L140,62 L131,54 L122,55 L113,62 L104,86 L108,100 L111,110 L111,127 Z" fill="url(#p2arch)"/>
<g clip-path="url(#p2clip)">
<path d="M106,30 L140,28 L158,38 L150,45 L130,40 L112,38 Z" fill="#9a4a30" opacity=".5"/>
<path d="M122,55 L131,54 L140,62 L148,72 L151,85 L160,88 L158,60 L140,48 L120,50 Z" fill="#7a3a28" opacity=".45"/>
<path d="M84,95 L89,85 L96,92 L92,127 H82 Z" fill="#8a4430" opacity=".4"/>
<circle cx="135.4" cy="80.8" r="1.3" fill="#d8805a" opacity=".5"/>
<circle cx="135.3" cy="111.8" r="0.7" fill="#a04a34" opacity=".5"/>
<circle cx="138.1" cy="86.5" r="0.7" fill="#d8805a" opacity=".5"/>
<circle cx="117.8" cy="31.5" r="1.2" fill="#a04a34" opacity=".5"/>
<circle cx="156.9" cy="84.5" r="0.9" fill="#d8805a" opacity=".5"/>
<circle cx="159.2" cy="86.6" r="0.6" fill="#8a4030" opacity=".5"/>
<circle cx="180.1" cy="28.6" r="0.5" fill="#8a4030" opacity=".5"/>
<circle cx="152.8" cy="103.7" r="0.8" fill="#a04a34" opacity=".5"/>
<circle cx="181.4" cy="76.5" r="1.1" fill="#d8805a" opacity=".5"/>
<circle cx="82.5" cy="30.9" r="1.1" fill="#d8805a" opacity=".5"/>
<circle cx="199.7" cy="126.5" r="1.3" fill="#a04a34" opacity=".5"/>
<circle cx="112.0" cy="101.6" r="1.0" fill="#8a4030" opacity=".5"/>
<circle cx="90.3" cy="102.5" r="0.9" fill="#d8805a" opacity=".5"/>
<circle cx="127.6" cy="122.6" r="1.3" fill="#8a4030" opacity=".5"/>
<circle cx="107.2" cy="119.3" r="0.5" fill="#d8805a" opacity=".5"/>
<circle cx="197.7" cy="63.7" r="0.6" fill="#a04a34" opacity=".5"/>
<circle cx="105.4" cy="92.9" r="0.8" fill="#d8805a" opacity=".5"/>
<circle cx="121.2" cy="123.2" r="1.2" fill="#8a4030" opacity=".5"/>
<circle cx="97.9" cy="96.2" r="0.5" fill="#d8805a" opacity=".5"/>
<circle cx="176.0" cy="40.7" r="1.0" fill="#d8805a" opacity=".5"/>
<circle cx="142.0" cy="125.5" r="1.2" fill="#d8805a" opacity=".5"/>
<circle cx="158.0" cy="34.2" r="0.9" fill="#8a4030" opacity=".5"/>
<circle cx="82.1" cy="112.8" r="1.4" fill="#a04a34" opacity=".5"/>
<circle cx="117.9" cy="114.9" r="0.7" fill="#d8805a" opacity=".5"/>
<circle cx="199.5" cy="85.2" r="1.0" fill="#8a4030" opacity=".5"/>
<circle cx="198.7" cy="44.4" r="0.7" fill="#a04a34" opacity=".5"/>
<circle cx="120.8" cy="53.1" r="0.6" fill="#8a4030" opacity=".5"/>
<circle cx="106.6" cy="88.8" r="0.5" fill="#d8805a" opacity=".5"/>
<circle cx="125.9" cy="69.6" r="1.4" fill="#d8805a" opacity=".5"/>
<circle cx="180.2" cy="36.3" r="0.8" fill="#a04a34" opacity=".5"/>
<circle cx="100.2" cy="117.4" r="1.2" fill="#8a4030" opacity=".5"/>
<circle cx="167.6" cy="38.6" r="1.1" fill="#a04a34" opacity=".5"/>
<circle cx="105.2" cy="121.8" r="1.3" fill="#a04a34" opacity=".5"/>
<circle cx="91.3" cy="27.0" r="0.6" fill="#a04a34" opacity=".5"/>
<circle cx="195.6" cy="47.0" r="1.1" fill="#d8805a" opacity=".5"/>
<circle cx="131.7" cy="117.0" r="0.9" fill="#a04a34" opacity=".5"/>
<circle cx="102.7" cy="97.6" r="0.6" fill="#8a4030" opacity=".5"/>
<circle cx="138.6" cy="90.6" r="1.1" fill="#8a4030" opacity=".5"/>
<circle cx="115.1" cy="118.3" r="0.7" fill="#8a4030" opacity=".5"/>
<circle cx="90.2" cy="65.2" r="0.7" fill="#8a4030" opacity=".5"/>
<circle cx="102.8" cy="60.7" r="1.0" fill="#8a4030" opacity=".5"/>
<circle cx="92.9" cy="36.5" r="0.9" fill="#d8805a" opacity=".5"/>
<circle cx="159.5" cy="94.6" r="1.0" fill="#8a4030" opacity=".5"/>
<circle cx="151.6" cy="119.0" r="0.9" fill="#d8805a" opacity=".5"/>
<circle cx="164.7" cy="123.1" r="0.5" fill="#a04a34" opacity=".5"/>
<circle cx="90.8" cy="29.1" r="0.8" fill="#8a4030" opacity=".5"/>
<circle cx="199.9" cy="29.9" r="1.0" fill="#a04a34" opacity=".5"/>
<circle cx="87.2" cy="120.3" r="1.2" fill="#8a4030" opacity=".5"/>
<circle cx="175.6" cy="118.1" r="0.8" fill="#a04a34" opacity=".5"/>
<circle cx="137.8" cy="30.2" r="1.3" fill="#8a4030" opacity=".5"/>
<circle cx="183.9" cy="82.1" r="1.1" fill="#d8805a" opacity=".5"/>
<circle cx="126.7" cy="23.3" r="0.6" fill="#8a4030" opacity=".5"/>
<circle cx="157.4" cy="126.3" r="1.3" fill="#a04a34" opacity=".5"/>
<circle cx="121.0" cy="120.1" r="1.1" fill="#d8805a" opacity=".5"/>
<circle cx="134.0" cy="110.0" r="0.6" fill="#a04a34" opacity=".5"/>
<circle cx="85.5" cy="85.1" r="0.9" fill="#8a4030" opacity=".5"/>
<circle cx="195.0" cy="33.9" r="1.2" fill="#a04a34" opacity=".5"/>
<circle cx="190.6" cy="48.9" r="0.5" fill="#d8805a" opacity=".5"/>
<circle cx="98.9" cy="86.2" r="1.0" fill="#d8805a" opacity=".5"/>
<circle cx="159.9" cy="68.4" r="1.3" fill="#d8805a" opacity=".5"/>
<circle cx="129.8" cy="48.3" r="1.1" fill="#8a4030" opacity=".5"/>
<circle cx="185.9" cy="62.4" r="1.0" fill="#d8805a" opacity=".5"/>
<circle cx="106.8" cy="36.1" r="0.8" fill="#8a4030" opacity=".5"/>
<circle cx="165.9" cy="121.8" r="0.7" fill="#8a4030" opacity=".5"/>
<circle cx="95.3" cy="71.5" r="1.3" fill="#d8805a" opacity=".5"/>
<circle cx="127.1" cy="76.6" r="1.1" fill="#a04a34" opacity=".5"/>
<circle cx="181.0" cy="125.1" r="0.9" fill="#8a4030" opacity=".5"/>
<circle cx="179.8" cy="51.2" r="1.0" fill="#a04a34" opacity=".5"/>
<circle cx="165.6" cy="81.9" r="0.8" fill="#a04a34" opacity=".5"/>
<circle cx="84.3" cy="36.3" r="0.9" fill="#8a4030" opacity=".5"/>
<circle cx="172.8" cy="50.0" r="1.2" fill="#8a4030" opacity=".5"/>
<circle cx="198.1" cy="34.1" r="0.6" fill="#a04a34" opacity=".5"/>
<circle cx="159.3" cy="106.8" r="1.4" fill="#a04a34" opacity=".5"/>
<circle cx="105.4" cy="108.5" r="0.7" fill="#a04a34" opacity=".5"/>
<circle cx="83.3" cy="71.6" r="1.1" fill="#8a4030" opacity=".5"/>
<circle cx="108.7" cy="103.8" r="1.0" fill="#a04a34" opacity=".5"/>
<circle cx="141.0" cy="126.7" r="0.6" fill="#a04a34" opacity=".5"/>
<circle cx="188.9" cy="31.2" r="1.3" fill="#a04a34" opacity=".5"/>
<circle cx="127.8" cy="69.3" r="0.7" fill="#8a4030" opacity=".5"/>
<circle cx="126.5" cy="81.7" r="1.3" fill="#d8805a" opacity=".5"/>
<circle cx="136.7" cy="90.4" r="0.7" fill="#a04a34" opacity=".5"/>
<circle cx="184.2" cy="105.8" r="1.3" fill="#8a4030" opacity=".5"/>
<circle cx="107.2" cy="116.5" r="1.4" fill="#d8805a" opacity=".5"/>
<circle cx="145.4" cy="105.0" r="0.8" fill="#a04a34" opacity=".5"/>
<circle cx="183.0" cy="58.6" r="0.6" fill="#d8805a" opacity=".5"/>
<circle cx="122.4" cy="66.2" r="0.7" fill="#8a4030" opacity=".5"/>
<circle cx="107.8" cy="113.1" r="0.9" fill="#8a4030" opacity=".5"/>
<circle cx="102.4" cy="57.2" r="1.2" fill="#8a4030" opacity=".5"/>
<circle cx="137.5" cy="127.0" r="1.3" fill="#a04a34" opacity=".5"/>
<circle cx="181.1" cy="94.4" r="1.4" fill="#d8805a" opacity=".5"/>
<circle cx="150.3" cy="94.4" r="1.2" fill="#d8805a" opacity=".5"/>
<circle cx="144.1" cy="52.5" r="1.2" fill="#a04a34" opacity=".5"/>
<circle cx="101.4" cy="76.0" r="1.3" fill="#d8805a" opacity=".5"/>
<circle cx="118.8" cy="62.0" r="1.3" fill="#a04a34" opacity=".5"/>
<circle cx="106.6" cy="111.3" r="1.4" fill="#a04a34" opacity=".5"/>
<circle cx="114.2" cy="74.3" r="0.9" fill="#8a4030" opacity=".5"/>
<circle cx="141.4" cy="85.5" r="0.5" fill="#8a4030" opacity=".5"/>
<circle cx="142.9" cy="64.1" r="1.2" fill="#a04a34" opacity=".5"/>
<circle cx="96.4" cy="31.8" r="0.7" fill="#a04a34" opacity=".5"/>
<circle cx="136.2" cy="118.7" r="1.2" fill="#d8805a" opacity=".5"/>
<circle cx="113.8" cy="71.7" r="0.6" fill="#d8805a" opacity=".5"/>
<circle cx="188.3" cy="120.2" r="1.3" fill="#a04a34" opacity=".5"/>
<circle cx="119.4" cy="42.1" r="1.1" fill="#d8805a" opacity=".5"/>
<circle cx="97.3" cy="103.8" r="0.5" fill="#8a4030" opacity=".5"/>
<circle cx="100.4" cy="23.2" r="0.8" fill="#a04a34" opacity=".5"/>
<circle cx="123.9" cy="87.1" r="0.6" fill="#a04a34" opacity=".5"/>
<circle cx="150.7" cy="111.5" r="1.1" fill="#a04a34" opacity=".5"/>
<circle cx="105.3" cy="77.7" r="0.9" fill="#d8805a" opacity=".5"/>
<circle cx="156.7" cy="108.6" r="1.1" fill="#a04a34" opacity=".5"/>
<circle cx="106.1" cy="88.3" r="1.1" fill="#a04a34" opacity=".5"/>
<circle cx="107.5" cy="79.0" r="1.0" fill="#8a4030" opacity=".5"/>
<circle cx="109.5" cy="99.8" r="1.2" fill="#8a4030" opacity=".5"/>
<circle cx="119.3" cy="55.1" r="1.3" fill="#8a4030" opacity=".5"/>
<circle cx="173.8" cy="42.4" r="0.6" fill="#8a4030" opacity=".5"/>
<circle cx="97.6" cy="31.3" r="0.8" fill="#d8805a" opacity=".5"/>
<circle cx="180.2" cy="66.3" r="1.2" fill="#8a4030" opacity=".5"/>
<circle cx="105.7" cy="87.9" r="1.2" fill="#8a4030" opacity=".5"/>
<circle cx="105.7" cy="93.7" r="1.3" fill="#d8805a" opacity=".5"/>
<circle cx="95.6" cy="75.1" r="1.2" fill="#a04a34" opacity=".5"/>
<circle cx="199.8" cy="109.5" r="1.2" fill="#d8805a" opacity=".5"/>
<circle cx="94.5" cy="25.9" r="1.0" fill="#a04a34" opacity=".5"/>
<circle cx="188.8" cy="72.5" r="0.7" fill="#8a4030" opacity=".5"/>
<circle cx="106.1" cy="110.2" r="1.4" fill="#a04a34" opacity=".5"/>
<circle cx="93.2" cy="28.5" r="1.4" fill="#d8805a" opacity=".5"/>
<circle cx="91.2" cy="32.2" r="0.9" fill="#d8805a" opacity=".5"/>
<circle cx="142.8" cy="67.2" r="1.0" fill="#8a4030" opacity=".5"/>
<circle cx="156.8" cy="26.3" r="0.7" fill="#d8805a" opacity=".5"/>
<circle cx="135.6" cy="99.6" r="0.9" fill="#8a4030" opacity=".5"/>
<circle cx="153.4" cy="32.0" r="1.2" fill="#d8805a" opacity=".5"/>
<circle cx="187.4" cy="106.2" r="1.1" fill="#a04a34" opacity=".5"/>
<circle cx="192.9" cy="81.8" r="0.7" fill="#a04a34" opacity=".5"/>
<circle cx="198.0" cy="106.5" r="0.7" fill="#8a4030" opacity=".5"/>
<circle cx="169.8" cy="103.7" r="1.2" fill="#d8805a" opacity=".5"/>
<circle cx="97.7" cy="56.6" r="1.0" fill="#d8805a" opacity=".5"/>
<circle cx="172.5" cy="102.3" r="0.9" fill="#a04a34" opacity=".5"/>
<circle cx="103.8" cy="105.7" r="0.8" fill="#8a4030" opacity=".5"/>
<circle cx="83.3" cy="59.3" r="1.1" fill="#a04a34" opacity=".5"/>
<circle cx="87.8" cy="50.7" r="1.4" fill="#d8805a" opacity=".5"/>
<circle cx="121.9" cy="91.3" r="1.0" fill="#a04a34" opacity=".5"/>
<circle cx="91.1" cy="76.0" r="0.9" fill="#8a4030" opacity=".5"/>
<circle cx="164.7" cy="102.0" r="1.4" fill="#8a4030" opacity=".5"/>
<circle cx="95.5" cy="33.3" r="0.7" fill="#d8805a" opacity=".5"/>
<circle cx="129.4" cy="27.3" r="0.7" fill="#d8805a" opacity=".5"/>
<circle cx="83.3" cy="49.1" r="0.7" fill="#d8805a" opacity=".5"/>
<circle cx="146.9" cy="75.3" r="1.4" fill="#a04a34" opacity=".5"/>
<circle cx="181.9" cy="32.5" r="0.9" fill="#a04a34" opacity=".5"/>
<circle cx="91.0" cy="84.7" r="1.2" fill="#8a4030" opacity=".5"/>
<circle cx="127.6" cy="120.6" r="0.8" fill="#8a4030" opacity=".5"/>
<circle cx="183.0" cy="78.9" r="1.0" fill="#d8805a" opacity=".5"/>
<circle cx="193.5" cy="66.2" r="1.0" fill="#a04a34" opacity=".5"/>
<circle cx="118.9" cy="77.7" r="0.9" fill="#d8805a" opacity=".5"/>
<circle cx="148.2" cy="51.8" r="1.1" fill="#d8805a" opacity=".5"/>
<circle cx="85.2" cy="103.1" r="1.0" fill="#a04a34" opacity=".5"/>
<circle cx="100.5" cy="101.2" r="0.9" fill="#d8805a" opacity=".5"/>
<circle cx="170.3" cy="27.3" r="1.4" fill="#d8805a" opacity=".5"/>
<circle cx="90.7" cy="117.1" r="0.9" fill="#d8805a" opacity=".5"/>
<circle cx="111.6" cy="101.3" r="0.5" fill="#8a4030" opacity=".5"/>
<circle cx="192.6" cy="97.9" r="0.9" fill="#8a4030" opacity=".5"/>
<circle cx="153.2" cy="34.1" r="1.1" fill="#d8805a" opacity=".5"/>
<circle cx="95.9" cy="112.4" r="0.8" fill="#8a4030" opacity=".5"/>
</g>
</svg>


<!-- right dark region behind overlay -->
<div class="a" style="left:712px;top:938px;width:1420px;height:940px;background:#151515"></div>
<div class="a" style="left:712px;top:938px;width:1420px;height:4px;background:#060606"></div>
<div class="a" style="left:2108px;top:1179px;width:24px;height:72px;background:#1e3450"></div>
<div class="t" style="left:2110px;top:1203px;font-size:24px;color:#bdbdbd">Pages</div>
<div class="a" style="left:2109px;top:1261px;width:2px;height:47px;background:#4a4a4a"></div>
<div class="a" style="left:2109px;top:1306px;width:12px;height:2px;background:#4a4a4a"></div>
<div class="a" style="left:2130px;top:1271px;width:2px;height:72px;background:#1e3450"></div>
<div class="a" style="left:2108px;top:1562px;width:24px;height:2px;background:#c9a03c"></div>
<div class="a" style="left:708px;top:1865px;width:4px;height:13px;background:#050505"></div>

<!-- code editor overlay -->
<div class="a" style="left:708px;top:865px;width:1400px;height:1000px;background:#3b3b3b;box-shadow:0 0 48px rgba(0,0,0,.6)"></div>
<div class="a" style="left:800px;top:913px;width:1308px;height:904px;background:#323232"></div>
<div class="a" style="left:800px;top:913px;width:1280px;height:36px;border:4px solid #2a2a2a;background:#303030"></div>
<div class="a" style="left:2080px;top:913px;width:1px;height:904px;background:#4a4a4a"></div>
<div class="a" style="left:2081px;top:913px;width:27px;height:4px;background:#888"></div>
<div class="t" style="left:765px;top:917px;font-size:26px;color:#cfcfcf">1</div>
<svg style="left:820px;top:1820px" width="1300" height="45" viewBox="820 1820 1300 45">
  <path d="M828.6,1828.4 L847.6,1839.9 L828.6,1851.3 Z" fill="#a3a3a3"/>
  <path d="M2089,1858 L2103.5,1843.5 M2095,1858 L2103.5,1849.5 M2101,1858 L2103.5,1855.5" stroke="#9a9a9a" stroke-width="1.6"/>
</svg>
<div class="t" style="left:871px;top:1830.5px;font-size:24px;color:#a6a6a6;transform:scaleX(.928);transform-origin:0 0">TEST RUN CODE</div>
<div class="t" style="left:1800px;top:1831px;font-size:24px;color:#8a8a8a">Ln 1, Col 1</div>
<div class="t" style="left:1936px;top:1831px;font-size:24px;color:#8a8a8a">JavaScript</div>
<svg style="left:686px;top:1340px" width="24" height="50" viewBox="686 1340 24 50"><path d="M708.5,1345 L688.4,1365 L708.5,1384.2 Z" fill="#333"/></svg>
</body></html>
